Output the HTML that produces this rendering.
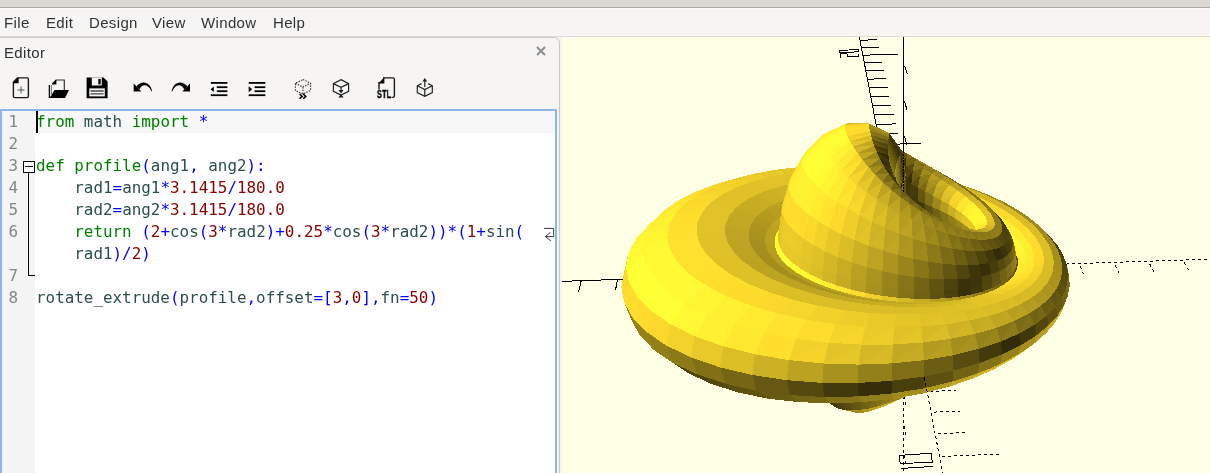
<!DOCTYPE html>
<html><head><meta charset="utf-8"><title>PythonSCAD</title>
<style>
html,body{margin:0;padding:0;}
#menubar,#docktitle,.ln,.cl,#stl{will-change:transform;}
body{width:1210px;height:473px;overflow:hidden;position:relative;background:#f6f5f4;font-family:"Liberation Sans",sans-serif;color:#2e3436;}
#topstrip{position:absolute;left:0;top:0;width:1210px;height:8px;background:#dbd7d2;border-bottom:1px solid #aca7a2;box-sizing:border-box;}
#menubar{position:absolute;left:0;top:8px;width:1210px;height:28px;background:#f6f5f4;border-bottom:1px solid #dedad6;border-top:1px solid #fafaf9;box-sizing:content-box;height:27px}
#menubar span{position:absolute;top:4px;font-size:15px;line-height:20px;white-space:nowrap;letter-spacing:0.35px;}
#dock{position:absolute;left:-1px;top:37px;width:561px;height:440px;box-sizing:border-box;border:1px solid #cdc7c2;border-top-right-radius:6px;background:#f6f5f4;}
#docktitle{position:absolute;left:4px;top:43px;font-size:15px;line-height:20px;letter-spacing:0.35px;}
#view{position:absolute;left:562px;top:37px;width:648px;height:436px;background:#ffffe5;overflow:hidden;}
#view svg{position:absolute;left:-562px;top:-37px;}
#edframe{position:absolute;left:0;top:109px;width:557px;height:370px;box-sizing:border-box;border:2px solid #8db5ea;border-right-width:2px;background:#fff;}
#margin{position:absolute;left:2px;top:111px;width:33px;height:362px;background:#f4f4f4;}
#caretline{position:absolute;left:35px;top:111px;width:520px;height:22px;background:#f7f7f7;}
#caret{position:absolute;left:36px;top:111px;width:2px;height:22px;background:#000;}
.ln,.cl{position:absolute;font-family:"DejaVu Sans Mono","Liberation Mono",monospace;font-size:15.9px;line-height:22px;height:22px;white-space:pre;}
.ln{left:1px;width:17px;text-align:right;color:#868686;}
.cl{left:35.9px;color:#2f4f4f;letter-spacing:0px;}
.k{color:#008000}.o{color:#0000ff}.n{color:#8b0000}
#icons{position:absolute;left:0;top:0;}
</style></head><body>
<div id="topstrip"></div>
<div id="menubar"><span style="left:4px">File</span><span style="left:46px">Edit</span><span style="left:89px">Design</span><span style="left:152px">View</span><span style="left:201px">Window</span><span style="left:273px">Help</span></div>
<div id="dock"></div>
<div id="docktitle">Editor</div>
<div id="edframe"></div><div id="margin"></div><div id="caretline"></div>
<div class="ln" style="top:111px">1</div>
<div class="ln" style="top:133px">2</div>
<div class="ln" style="top:155px">3</div>
<div class="ln" style="top:177px">4</div>
<div class="ln" style="top:199px">5</div>
<div class="ln" style="top:221px">6</div>
<div class="ln" style="top:265px">7</div>
<div class="ln" style="top:287px">8</div>
<div class="cl" style="top:111px"><span class="k">from</span> math <span class="k">import</span> <span class="o">*</span></div>
<div class="cl" style="top:155px"><span class="k">def</span> <span class="k">profile</span><span class="o">(</span>ang1<span class="o">,</span> ang2<span class="o">):</span></div>
<div class="cl" style="top:177px">    rad1<span class="o">=</span>ang1<span class="o">*</span><span class="n">3.1415</span><span class="o">/</span><span class="n">180.0</span></div>
<div class="cl" style="top:199px">    rad2<span class="o">=</span>ang2<span class="o">*</span><span class="n">3.1415</span><span class="o">/</span><span class="n">180.0</span></div>
<div class="cl" style="top:221px">    <span class="k">return</span> <span class="o">(</span><span class="n">2</span><span class="o">+</span>cos<span class="o">(</span><span class="n">3</span><span class="o">*</span>rad2<span class="o">)+</span><span class="n">0.25</span><span class="o">*</span>cos<span class="o">(</span><span class="n">3</span><span class="o">*</span>rad2<span class="o">))*(</span><span class="n">1</span><span class="o">+</span>sin<span class="o">(</span></div>
<div class="cl" style="top:243px">    rad1<span class="o">)/</span><span class="n">2</span><span class="o">)</span></div>
<div class="cl" style="top:287px">rotate_extrude<span class="o">(</span>profile<span class="o">,</span>offset<span class="o">=[</span><span class="n">3</span><span class="o">,</span><span class="n">0</span><span class="o">],</span>fn<span class="o">=</span><span class="n">50</span><span class="o">)</span></div>
<div id="caret"></div>
<svg style="position:absolute;left:0;top:109px" width="557" height="364" viewBox="0 109 557 364" shape-rendering="crispEdges">
<path d="M28.5,172 V275.5 H35" fill="none" stroke="#000" stroke-width="1"/>
<rect x="23.5" y="161.5" width="11" height="11" fill="#fff" stroke="#000" stroke-width="1"/>
<path d="M25,166.5 H33" stroke="#000" stroke-width="1"/>
<g shape-rendering="auto" fill="none" stroke="#222" stroke-width="0.9"><path d="M544,228.4 H553.7 V236.6 H545.5 M550.5,232.4 L545.4,236.6 L550.8,240.8"/></g>
</svg>
<svg id="icons" width="560" height="110" viewBox="0 0 560 110">
<!-- close x -->
<path d="M537,47 L545,55 M545,47 L537,55" stroke="#8b8e8f" stroke-width="2" fill="none"/>
<!-- new -->
<g fill="none" stroke="#1a1a1a" stroke-width="1.4">
<path d="M17.5,77.9 H27 Q28.4,77.9 28.4,79.3 V96.2 Q28.4,97.6 27,97.6 H14.8 Q13.4,97.6 13.4,96.2 V82 Z"/>
</g>
<path d="M12.7,83.2 L18.6,77.2 L18.6,83.2 Z" fill="#000"/>
<path d="M17.5,90 H24.5 M21,86.5 V93.5" stroke="#555" stroke-width="1" fill="none"/>
<!-- open -->
<path d="M52.3,84 L56,80 H64.3 V90" fill="none" stroke="#333" stroke-width="1.2"/>
<path d="M51.8,84.6 L56.4,79.6 L56.4,84.6 Z" fill="#000"/>
<path d="M49.4,85 V97.4 H51" fill="none" stroke="#111" stroke-width="1.4"/>
<path d="M51.5,85 V95" fill="none" stroke="#666" stroke-width="0.8"/>
<path d="M54.5,90 H69 L65,97.9 H49.8 Z" fill="#000"/>
<!-- save -->
<path d="M86.6,77.5 H103.5 L107.6,81.5 V98.2 H86.6 Z" fill="#000"/>
<rect x="91.8" y="77.5" width="10" height="8" fill="#f6f5f4"/>
<rect x="98.3" y="79" width="2.4" height="5.4" fill="#000"/>
<rect x="89.3" y="88.4" width="15.5" height="8" fill="#f6f5f4"/>
<path d="M90.5,91 H103.6 M90.5,93.8 H103.6" stroke="#444" stroke-width="1.3"/>
<!-- undo -->
<path d="M133.7,83.5 L141.3,91.5 L133.7,91.5 Z" fill="#000"/>
<path d="M136.4,86.2 Q141,81.4 146,82.9 Q150.6,84.4 152.1,91 L151.3,91.2 Q149.4,86.4 145.5,85.3 Q142,84.6 139.4,89.4 Z" fill="#000"/>
<!-- redo -->
<path d="M190,83.5 L182.4,91.5 L190,91.5 Z" fill="#000"/>
<path d="M187.3,86.2 Q182.7,81.4 177.7,82.9 Q173.1,84.4 171.6,91 L172.4,91.2 Q174.3,86.4 178.2,85.3 Q181.7,84.6 184.3,89.4 Z" fill="#000"/>
<!-- unindent -->
<g fill="#000">
<rect x="210.8" y="82" width="16.6" height="1.8"/><rect x="216.8" y="86.3" width="10.6" height="1.8"/><rect x="216.8" y="90.3" width="10.6" height="1.8"/><rect x="210.8" y="94.3" width="16.6" height="1.8"/>
<path d="M210.6,89.2 L213.8,86.4 V92 Z"/>
<rect x="248.7" y="82" width="16.6" height="1.8"/><rect x="254.6" y="86.3" width="10.7" height="1.8"/><rect x="254.6" y="90.3" width="10.7" height="1.8"/><rect x="248.7" y="94.3" width="16.6" height="1.8"/>
<path d="M252.2,89.2 L248.7,86.2 V92.2 Z"/>
</g>
<!-- preview -->
<g fill="none" stroke="#222" stroke-width="1.1" stroke-dasharray="1.4 1.3">
<path d="M303,79.5 L310.6,83.3 V90.5 L303,94 L295.4,90.5 V83.3 Z"/><path d="M295.4,83.3 L303,87 L310.6,83.3 M303,87 V94"/>
</g>
<path d="M299.6,94 L302.2,96.4 L299.6,98.8 M303.2,94 L305.8,96.4 L303.2,98.8" fill="none" stroke="#000" stroke-width="1.5"/>
<!-- render -->
<g fill="none" stroke="#222" stroke-width="1.2">
<path d="M341,79.6 L348.6,83.6 V91.3 L341,95 L333.4,91.3 V83.6 Z"/><path d="M333.4,83.6 L341,87.4 L348.6,83.6 M341,87.4 V91"/>
</g>
<path d="M338.4,90 H343.6 L341,93.6 Z M338.4,97.6 H343.6 L341,94 Z" fill="#222"/>
<!-- STL -->
<path d="M383,77.9 H393 Q394.4,77.9 394.4,79.3 V96 Q394.4,97.4 393,97.4 H391.5 M379,89.5 V82" fill="none" stroke="#1a1a1a" stroke-width="1.4"/>
<path d="M378.2,83.6 L384.4,77.2 L384.4,83.6 Z" fill="#000"/>
<!-- send -->
<g fill="none" stroke="#222" stroke-width="1.2">
<path d="M421.5,83.6 L417.3,85.8 V92.6 L424.8,96.3 L432.3,92.6 V85.8 L428.1,83.6"/><path d="M417.3,85.8 L424.8,89.5 L432.3,85.8 M424.8,89.5 V96.3"/>
<path d="M424.8,87 V79.5"/>
</g>
<path d="M422.4,81.6 L424.8,78 L427.2,81.6 Z" fill="#222"/>
</svg>

<div id="stl" style="position:absolute;left:376.9px;top:88.6px;font:bold 10.4px/12px 'Liberation Sans',sans-serif;color:#000;transform:scaleX(0.7);transform-origin:0 0;letter-spacing:0.2px;-webkit-text-stroke:0.35px #000">STL</div>
<div id="view"><svg width="1210" height="473" viewBox="0 0 1210 473" shape-rendering="crispEdges">
<g fill="none" stroke="#000" stroke-width="1">
<path d="M903.8,269.6L788.8,-332.6M903.8,269.6L397.8,287M903.8,269.6L903.8,-45.8M901,254.9L925.2,254.1M868.4,270.8L870,281.5M904.4,237.2L907.1,247.5M898.3,240.8L922.1,240M832.9,272L834,282.7M904.4,204.2L907.1,214.1M895.7,227.2L919,226.4M797.3,273.3L797.8,284M904.4,170.5L907.1,180.1M893.2,214.1L916.1,213.3M761.6,274.5L761.6,285.3M904.4,136.2L907.1,145.3M890.8,201.5L913.3,200.7M725.7,275.7L725.3,286.5M904.4,101.3L907.1,109.9M888.5,189.3L910.5,188.6M689.8,277L688.8,287.8M904.4,65.6L907.2,73.8M886.2,177.5L907.9,176.9M653.7,278.2L652.2,289.1M904.4,29.2L907.2,37M884.1,166.2L905.4,165.5M617.5,279.4L615.5,290.4M904.4,-7.9L907.2,-0.6M882,155.2L902.9,154.6M581.2,280.7L578.6,291.6M879.9,144.6L921.2,143.4M544.8,281.9L538.5,304.2M878,134.3L898.3,133.8M508.2,283.2L504.6,294.2M876.1,124.4L896.1,123.9M471.5,284.4L467.4,295.5M874.2,114.8L893.9,114.3M434.8,285.7L430.1,296.8M872.5,105.5L891.8,105M870.7,96.5L889.8,96M869.1,87.7L887.8,87.2M867.5,79.2L885.9,78.7M865.9,71L884.1,70.5M864.3,63L882.3,62.5M862.9,55.2L898.3,54.3M861.4,47.6L878.9,47.2M860,40.2L877.2,39.8M858.6,33.1L875.6,32.7M857.3,26.1L874.1,25.7M856,19.4L872.6,19M854.8,12.8L871.1,12.4M853.5,6.3L869.7,6M852.3,0.1L868.3,-0.3M851.2,-6L866.9,-6.4M850,-12L881.1,-12.7M848.9,-17.8L864.3,-18.1M847.9,-23.5L863,-23.8M846.8,-29L861.8,-29.3M845.8,-34.4L860.5,-34.7"/>
<path stroke-dasharray="3 3" d="M903.8,269.6L924.4,377.5M903.8,269.6L1387.4,253M903.8,269.6L903.8,536"/>
<path stroke-dasharray="3 3" stroke-dashoffset="3" d="M906.7,284.9L931.9,284M939.1,268.4L941.6,279M903.8,301.4L905.8,312.4M909.8,300.8L935.5,299.9M974.2,267.2L977.2,277.7M903.8,332.6L905.8,343.9M912.9,317.4L939.2,316.4M1009.3,266L1012.8,276.5M903.8,363.3L905.8,374.9M916.2,334.7L943,333.7M1044.2,264.8L1048.2,275.3M903.8,393.4L905.8,405.3M919.7,352.8L947.1,351.7M1079,263.6L1083.5,274M903.8,422.9L905.7,435.1M923.3,371.7L951.3,370.6M1113.7,262.4L1118.7,272.8M903.8,451.9L905.7,464.4M927.1,391.5L955.7,390.3M1148.3,261.2L1153.7,271.6M903.8,480.5L905.7,493.2M931,412.2L960.3,411M1182.8,260L1188.7,270.4M903.8,508.5L905.7,521.5M935.2,433.9L965.2,432.6M1217.2,258.8L1223.5,269.2M939.5,456.6L1001,454M1251.5,257.7L1265.3,278.5M944.1,480.6L975.6,479.2M1285.6,256.5L1292.9,266.8M948.9,505.8L981.2,504.3M1319.7,255.3L1327.4,265.5M954,532.3L987.2,530.8M1353.6,254.1L1361.8,264.4"/>
<path d="M840.5,58 V54 L847,53.5 L847.5,57 L858.5,56.2 V53.8 M839.5,52.6 V50.5 L858,49.5 L858.6,51.8 Z"/>
<path d="M899,455.4 L931,453.3 L932.4,462.3 L900.2,463.5 Z M901,468.5 L932.8,466.4"/>
</g>
<g id="obj">
<rect x="893" y="175" width="4" height="6" fill="#483e0d"/>
<path fill="#9e881c" d="M972.4,188.6L953.9,182.7L950.7,182L968.1,187.8z"/>
<path fill="#9a851b" d="M989.1,195.1L972.4,188.6L968.1,187.8z"/>
<path fill="#9d881c" d="M989.1,195.1L968.1,187.8L984,194.2z"/>
<path fill="#d2b525" d="M968.1,187.8L950.7,182L946.9,185.4L963.1,190.8z"/>
<path fill="#e4c528" d="M797.5,167.2L774.6,169.9L788.2,173.5L808.3,171.2z"/>
<path fill="#d3b625" d="M984,194.2L968.1,187.8L963.1,190.8L978,196.7z"/>
<path fill="#99841b" d="M1004,202.1L989.1,195.1L984,194.2z"/>
<path fill="#9c871c" d="M1004,202.1L984,194.2L998.2,200.9z"/>
<path fill="#eecd2a" d="M739.1,177.5L716.3,183.9L732.2,179.6L752.7,174z"/>
<path fill="#e9c929" d="M774.6,169.9L752.7,174L768.9,177.1L788.2,173.5z"/>
<path fill="#f4d32b" d="M978,196.7L963.1,190.8L958.2,196.6L972,201.9z"/>
<path fill="#d4b725" d="M998.2,200.9L984,194.2L978,196.7L991.4,203.1z"/>
<path fill="#e2c428" d="M808.3,171.2L788.2,173.5L801.7,181.9z"/>
<path fill="#99851b" d="M1017,209.4L1004,202.1L998.2,200.9z"/>
<path fill="#9c871c" d="M1017,209.4L998.2,200.9L1010.7,208.1z"/>
<path fill="#f7d52c" d="M991.4,203.1L978,196.7L972,201.9L984.7,207.6z"/>
<path fill="#edcd2a" d="M752.7,174L732.2,179.6L751.1,181.9L768.9,177.1z"/>
<path fill="#e1c228" d="M788.2,173.5L768.9,177.1L785.1,185.1L801.7,181.9z"/>
<path fill="#d6b826" d="M1010.7,208.1L998.2,200.9L991.4,203.1L1003.3,209.7z"/>
<path fill="#f8d62c" d="M716.3,183.9L695.5,191.8L713.6,186.5L732.2,179.6z"/>
<path fill="#9a851b" d="M1028.4,217L1017,209.4L1010.7,208.1z"/>
<path fill="#9d881c" d="M1028.4,217L1010.7,208.1L1021.6,215.4z"/>
<path fill="#fad82c" d="M1003.3,209.7L991.4,203.1L984.7,207.6L996,213.7z"/>
<path fill="#d4b726" d="M801.7,181.9L785.1,185.1L798.9,195.3z"/>
<path fill="#d7ba26" d="M1021.6,215.4L1010.7,208.1L1003.3,209.7L1013.7,216.6z"/>
<path fill="#e1c228" d="M768.9,177.1L751.1,181.9L769.9,189.4L785.1,185.1z"/>
<path fill="#f2d12b" d="M732.2,179.6L713.6,186.5L735,187.9L751.1,181.9z"/>
<path fill="#fcda2d" d="M1013.7,216.6L1003.3,209.7L996,213.7L1006,220z"/>
<path fill="#9d881c" d="M1038,224.8L1028.4,217L1021.6,215.4L1030.9,222.9z"/>
<path fill="#cfb325" d="M785.1,185.1L769.9,189.4L785.8,199.3L798.9,195.3z"/>
<path fill="#ffde2d" d="M695.5,191.8L677.4,201.1L697.5,194.7L713.6,186.5z"/>
<path fill="#ffed30" d="M1006,220L996,213.7L989.9,218.5L999.4,224.3z"/>
<path fill="#d9bb26" d="M1030.9,222.9L1021.6,215.4L1013.7,216.6L1022.6,223.7z"/>
<path fill="#e0c228" d="M751.1,181.9L735,187.9L756.3,194.7L769.9,189.4z"/>
<path fill="#443a0c" d="M1050.8,237.2L1042.6,229.2L1038,224.8L1045.9,232.7z"/>
<path fill="#fedc2d" d="M1022.6,223.7L1013.7,216.6L1006,220L1014.5,226.5z"/>
<path fill="#f6d42b" d="M713.6,186.5L697.5,194.7L721.2,195L735,187.9z"/>
<path fill="#9f891c" d="M1045.9,232.7L1038,224.8L1030.9,222.9L1038.6,230.5z"/>
<path fill="#ffef31" d="M1014.5,226.5L1006,220L999.4,224.3L1007.7,230.3z"/>
<path fill="#ccb024" d="M769.9,189.4L756.3,194.7L774.3,204.1L785.8,199.3z"/>
<path fill="#dabc27" d="M1038.6,230.5L1030.9,222.9L1022.6,223.7L1030,230.9z"/>
<path fill="#e0c228" d="M735,187.9L721.2,195L744.7,201L756.3,194.7z"/>
<path fill="#bca321" d="M785.8,199.3L774.3,204.1L787.1,212.5z"/>
<path fill="#ffdd2d" d="M1030,230.9L1022.6,223.7L1014.5,226.5L1021.6,233.2z"/>
<path fill="#ffe62f" d="M677.4,201.1L662.5,211.8L684.3,204.1L697.5,194.7z"/>
<path fill="#463c0c" d="M1057.4,245.3L1050.8,237.2L1045.9,232.7L1052.3,240.6z"/>
<path fill="#fff031" d="M1021.6,233.2L1014.5,226.5L1007.7,230.3L1014.5,236.5z"/>
<path fill="#fff833" d="M1014.5,236.5L1007.7,230.3L1002.8,233.6L1009.5,239.4z"/>
<path fill="#c8ad23" d="M756.3,194.7L744.7,201L764.6,209.8L774.3,204.1z"/>
<path fill="#a08a1c" d="M1052.3,240.6L1045.9,232.7L1038.6,230.5L1044.7,238.2z"/>
<path fill="#746414" d="M951.3,178.7L940.8,172.6L936.4,170.5L946.2,176.6z"/>
<path fill="#776715" d="M961.4,185L951.3,178.7L946.2,176.6z"/>
<path fill="#7a6916" d="M961.4,185L946.2,176.6L955.6,182.8z"/>
<path fill="#b69e20" d="M774.3,204.1L764.6,209.8L778.6,217.7L787.1,212.5z"/>
<path fill="#716214" d="M940.8,172.6L926.5,164.6L936.4,170.5z"/>
<path fill="#dbbd27" d="M1044.7,238.2L1038.6,230.5L1030,230.9L1035.8,238.1z"/>
<path fill="#fad82c" d="M697.5,194.7L684.3,204.1L710.1,203.2L721.2,195z"/>
<path fill="#7b6a16" d="M970.7,191.4L961.4,185L955.6,182.8z"/>
<path fill="#7f6d16" d="M970.7,191.4L955.6,182.8L964.4,189z"/>
<path fill="#ffdd2d" d="M1035.8,238.1L1030,230.9L1021.6,233.2L1027.1,239.9z"/>
<path fill="#dcbe27" d="M874.7,408.2L876.3,407.3L860.9,413z"/>
<path fill="#fff031" d="M1027.1,239.9L1021.6,233.2L1014.5,236.5L1019.9,242.8z"/>
<path fill="#c4a923" d="M787.1,212.5L778.6,217.7L786.6,221.5z"/>
<path fill="#fff833" d="M1019.9,242.8L1014.5,236.5L1009.5,239.4L1014.7,245.4z"/>
<path fill="#ffeb30" d="M648.3,225.6L636.2,238.6L651.3,223.6L662.5,211.8z"/>
<path fill="#7f6e16" d="M979.1,197.8L970.7,191.4L964.4,189z"/>
<path fill="#837117" d="M979.1,197.8L964.4,189L972.5,195.3z"/>
<path fill="#a38d1d" d="M946.2,176.6L936.4,170.5L931.9,173.4z"/>
<path fill="#9f891c" d="M946.2,176.6L931.9,173.4L940.8,179.1z"/>
<path fill="#e0c228" d="M721.2,195L710.1,203.2L735.6,208.1L744.7,201z"/>
<path fill="#97821b" d="M936.4,170.5L926.5,164.6L923,167.8z"/>
<path fill="#8f7b19" d="M936.4,170.5L923,167.8L931.9,173.4z"/>
<path fill="#af971f" d="M955.6,182.8L946.2,176.6L940.8,179.1L949.6,184.9z"/>
<path fill="#483e0d" d="M1062.4,253.6L1057.4,245.3L1052.3,240.6L1057.2,248.7z"/>
<path fill="#8c7919" d="M926.5,164.6L916.7,158.9L914.5,162.5z"/>
<path fill="#7f6e16" d="M926.5,164.6L914.5,162.5L923,167.8z"/>
<path fill="#bda321" d="M964.4,189L955.6,182.8L949.6,184.9L957.9,190.7z"/>
<path fill="#736314" d="M940,210.5L933.5,217.8L941.4,220.6z"/>
<path fill="#706014" d="M940,210.5L932.2,207.1L933.5,217.8z"/>
<path fill="#5d5010" d="M932.2,207.1L925.7,215.4L933.5,217.8z"/>
<path fill="#594d10" d="M932.2,207.1L924.6,203.9L925.7,215.4z"/>
<path fill="#e5c629" d="M876.3,407.3L878.5,405.9L865.5,412.3z"/>
<path fill="#847217" d="M947.6,214.2L940,210.5L941.4,220.6L949.1,223.7z"/>
<path fill="#c6ab23" d="M744.7,201L735.6,208.1L757,216.1L764.6,209.8z"/>
<path fill="#443b0c" d="M924.6,203.9L918.3,213.3L925.7,215.4z"/>
<path fill="#40370b" d="M924.6,203.9L917.5,201L918.3,213.3z"/>
<path fill="#a28b1d" d="M1057.2,248.7L1052.3,240.6L1044.7,238.2L1049.3,245.8z"/>
<path fill="#847217" d="M986.5,204L979.1,197.8L972.5,195.3z"/>
<path fill="#877518" d="M986.5,204L972.5,195.3L979.6,201.3z"/>
<path fill="#827017" d="M916.7,158.9L907.1,153.5L906.5,157.4z"/>
<path fill="#706114" d="M916.7,158.9L906.5,157.4L914.5,162.5z"/>
<path fill="#c9ad23" d="M972.5,195.3L964.4,189L957.9,190.7z"/>
<path fill="#ccb024" d="M972.5,195.3L957.9,190.7L965.7,196.5z"/>
<path fill="#b29a1f" d="M764.6,209.8L757,216.1L772.1,223.6L778.6,217.7z"/>
<path fill="#937f1a" d="M954.8,218.2L947.6,214.2L949.1,223.7L956.3,227.2z"/>
<path fill="#cfb325" d="M949.6,184.9L940.8,179.1L936.1,185.9z"/>
<path fill="#c6ab23" d="M949.6,184.9L936.1,185.9L944.4,191z"/>
<path fill="#b79e20" d="M940.8,179.1L931.9,173.4L928,180.9z"/>
<path fill="#ab931e" d="M940.8,179.1L928,180.9L936.1,185.9z"/>
<path fill="#c0a622" d="M778.6,217.7L772.1,223.6L780.6,227L786.6,221.5z"/>
<path fill="#39320a" d="M917.5,201L911.6,211.6L918.3,213.3z"/>
<path fill="#3f370b" d="M917.5,201L911.1,198.4L911.6,211.6z"/>
<path fill="#dcbe27" d="M1049.3,245.8L1044.7,238.2L1035.8,238.1L1040.2,245.2z"/>
<path fill="#ffed30" d="M662.5,211.8L651.3,223.6L674.6,214.5L684.3,204.1z"/>
<path fill="#e6c729" d="M957.9,190.7L949.6,184.9L944.4,191z"/>
<path fill="#e1c228" d="M957.9,190.7L944.4,191L952.4,196.2z"/>
<path fill="#9c871c" d="M941,200.1L932.2,207.1L940,210.5z"/>
<path fill="#9f891c" d="M941,200.1L933.1,195.8L932.2,207.1z"/>
<path fill="#b69d20" d="M948.7,204.5L941,200.1L940,210.5L947.6,214.2z"/>
<path fill="#7f6e17" d="M933.1,195.8L924.6,203.9L932.2,207.1z"/>
<path fill="#837117" d="M933.1,195.8L925.4,191.7L924.6,203.9z"/>
<path fill="#a08a1c" d="M931.9,173.4L923,167.8L920,176.1z"/>
<path fill="#8e7b19" d="M931.9,173.4L920,176.1L928,180.9z"/>
<path fill="#ffdd2d" d="M1040.2,245.2L1035.8,238.1L1027.1,239.9L1031.2,246.6z"/>
<path fill="#7b6a16" d="M907.1,153.5L898,148.4L899.2,152.5z"/>
<path fill="#645612" d="M907.1,153.5L899.2,152.5L906.5,157.4z"/>
<path fill="#9e881c" d="M961.2,222.3L954.8,218.2L956.3,227.2L962.8,230.9z"/>
<path fill="#c5aa23" d="M944.4,191L936.1,185.9L933.1,195.8z"/>
<path fill="#bba221" d="M944.4,191L933.1,195.8L941,200.1z"/>
<path fill="#fbd82c" d="M965.7,196.5L957.9,190.7L952.4,196.2z"/>
<path fill="#f8d62c" d="M965.7,196.5L952.4,196.2L959.8,201.4z"/>
<path fill="#ffef31" d="M1031.2,246.6L1027.1,239.9L1019.9,242.8L1023.7,249.1z"/>
<path fill="#e0c228" d="M952.4,196.2L944.4,191L941,200.1z"/>
<path fill="#d9bb26" d="M952.4,196.2L941,200.1L948.7,204.5z"/>
<path fill="#d3b625" d="M979.6,201.3L972.5,195.3L965.7,196.5z"/>
<path fill="#d7b926" d="M979.6,201.3L965.7,196.5L972.5,202.2z"/>
<path fill="#fff733" d="M1023.7,249.1L1019.9,242.8L1014.7,245.4L1018.5,251.4z"/>
<path fill="#3f360b" d="M831.2,404.4L834.8,407.1L818.1,394.2z"/>
<path fill="#cbaf24" d="M955.9,209.1L948.7,204.5L947.6,214.2L954.8,218.2z"/>
<path fill="#fff231" d="M1018.5,251.4L1014.7,245.4L1011.9,246.6L1015.5,252.5z"/>
<path fill="#9b861b" d="M936.1,185.9L925.4,191.7L933.1,195.8z"/>
<path fill="#a7911e" d="M936.1,185.9L928,180.9L925.4,191.7z"/>
<path fill="#615411" d="M925.4,191.7L917.5,201L924.6,203.9z"/>
<path fill="#655712" d="M925.4,191.7L918.1,187.8L917.5,201z"/>
<path fill="#9a851b" d="M857.2,412.9L860.9,413L845.3,410.1z"/>
<path fill="#917d1a" d="M857.2,412.9L845.3,410.1L839.5,409z"/>
<path fill="#897618" d="M923,167.8L914.5,162.5L912.7,171.5z"/>
<path fill="#736314" d="M923,167.8L912.7,171.5L920,176.1z"/>
<path fill="#877518" d="M992.6,210.1L986.5,204L979.6,201.3z"/>
<path fill="#8b7819" d="M992.6,210.1L979.6,201.3L985.6,207.2z"/>
<path fill="#f8d62c" d="M959.8,201.4L952.4,196.2L948.7,204.5z"/>
<path fill="#f3d22b" d="M959.8,201.4L948.7,204.5L955.9,209.1z"/>
<path fill="#7a6916" d="M928,180.9L918.1,187.8L925.4,191.7z"/>
<path fill="#897618" d="M928,180.9L920,176.1L918.1,187.8z"/>
<path fill="#dbbd27" d="M962.4,213.7L955.9,209.1L954.8,218.2L961.2,222.3z"/>
<path fill="#fddb2d" d="M684.3,204.1L674.6,214.5L702.1,212.3L710.1,203.2z"/>
<path fill="#ffe72f" d="M972.5,202.2L965.7,196.5L959.8,201.4L966.4,206.6z"/>
<path fill="#41380c" d="M918.1,187.8L911.1,198.4L917.5,201z"/>
<path fill="#463c0c" d="M918.1,187.8L911.4,184.2L911.1,198.4z"/>
<path fill="#a48e1d" d="M966.6,226.4L961.2,222.3L962.8,230.9L968.3,234.8z"/>
<path fill="#ffe72f" d="M966.4,206.6L959.8,201.4L955.9,209.1z"/>
<path fill="#ffe42f" d="M966.4,206.6L955.9,209.1L962.4,213.7z"/>
<path fill="#3f360b" d="M1003.4,221.7L998.4,215.8L992.6,210.1L997.4,215.9z"/>
<path fill="#736314" d="M914.5,162.5L906.5,157.4L906,167z"/>
<path fill="#584c10" d="M914.5,162.5L906,167L912.7,171.5z"/>
<path fill="#594d10" d="M920,176.1L911.4,184.2L918.1,187.8z"/>
<path fill="#6b5c13" d="M920,176.1L912.7,171.5L911.4,184.2z"/>
<path fill="#dbbd27" d="M985.6,207.2L979.6,201.3L972.5,202.2z"/>
<path fill="#dfc027" d="M985.6,207.2L972.5,202.2L978.2,207.7z"/>
<path fill="#4c410d" d="M1065.8,262L1062.4,253.6L1057.2,248.7L1060.4,256.8z"/>
<path fill="#e1c228" d="M710.1,203.2L702.1,212.3L729,216.1L735.6,208.1z"/>
<path fill="#e5c629" d="M967.9,218.3L962.4,213.7L961.2,222.3L966.6,226.4z"/>
<path fill="#42390c" d="M911.4,184.2L905.5,196L911.1,198.4z"/>
<path fill="#3d340b" d="M911.4,184.2L905.6,180.7L905.5,196z"/>
<path fill="#a58e1d" d="M860.9,413L865.5,412.3L852.2,410.4z"/>
<path fill="#9a851b" d="M860.9,413L852.2,410.4L845.3,410.1z"/>
<path fill="#fff332" d="M978.2,207.7L972.5,202.2L966.4,206.6L972,211.6z"/>
<path fill="#433a0c" d="M834.8,407.1L839.5,409L824.3,397.3z"/>
<path fill="#3f370b" d="M834.8,407.1L824.3,397.3L818.1,394.2z"/>
<path fill="#c3a923" d="M735.6,208.1L729,216.1L751.7,223.1L757,216.1z"/>
<path fill="#fff231" d="M972,211.6L966.4,206.6L962.4,213.7L967.9,218.3z"/>
<path fill="#8c7919" d="M997.4,215.9L992.6,210.1L985.6,207.2L990.1,212.7z"/>
<path fill="#ae961f" d="M757,216.1L751.7,223.1L767.6,229.9L772.1,223.6z"/>
<path fill="#a6901d" d="M970.8,230.5L966.6,226.4L968.3,234.8z"/>
<path fill="#a38d1d" d="M1060.4,256.8L1057.2,248.7L1049.3,245.8L1052.3,253.4z"/>
<path fill="#bda321" d="M772.1,223.6L767.6,229.9L776.5,233L780.6,227z"/>
<path fill="#39310a" d="M912.7,171.5L905.6,180.7L911.4,184.2z"/>
<path fill="#4e430e" d="M912.7,171.5L906,167L905.6,180.7z"/>
<path fill="#605311" d="M906.5,157.4L899.2,152.5L900.2,162.8z"/>
<path fill="#40370b" d="M906.5,157.4L900.2,162.8L906,167z"/>
<path fill="#dcbe27" d="M1052.3,253.4L1049.3,245.8L1040.2,245.2L1042.9,252.4z"/>
<path fill="#fff031" d="M1020.6,257.5L1018.5,251.4L1015.5,252.5L1017.5,258.4z"/>
<path fill="#4d430e" d="M1017.5,258.4L1015.5,252.5L1014.3,251.4L1016.3,257.2z"/>
<path fill="#fff532" d="M1026,255.4L1023.7,249.1L1018.5,251.4L1020.6,257.5z"/>
<path fill="#ffdc2d" d="M1042.9,252.4L1040.2,245.2L1031.2,246.6L1033.7,253.3z"/>
<path fill="#ffed31" d="M1033.7,253.3L1031.2,246.6L1023.7,249.1L1026,255.4z"/>
<path fill="#e1c228" d="M990.1,212.7L985.6,207.2L978.2,207.7z"/>
<path fill="#e4c528" d="M990.1,212.7L978.2,207.7L982.7,212.9z"/>
<path fill="#605311" d="M905.6,180.7L901.1,193.8L905.5,196z"/>
<path fill="#5a4e10" d="M905.6,180.7L900.9,177.5L901.1,193.8z"/>
<path fill="#eaca29" d="M972,222.6L967.9,218.3L966.6,226.4L970.8,230.5z"/>
<path fill="#41380c" d="M1006.8,227.4L1003.4,221.7L997.4,215.9L1000.7,221.3z"/>
<path fill="#b1991f" d="M865.5,412.3L870.8,411L860,409.9z"/>
<path fill="#a48e1d" d="M865.5,412.3L860,409.9L852.2,410.4z"/>
<path fill="#fff933" d="M982.7,212.9L978.2,207.7L972,211.6L976.2,216.4z"/>
<path fill="#fff833" d="M976.2,216.4L972,211.6L967.9,218.3L972,222.6z"/>
<path fill="#ffec30" d="M780.6,227L776.5,233L780.1,229.7z"/>
<path fill="#fff432" d="M636.2,238.6L628.6,252.5L644.4,236.3L651.3,223.6z"/>
<path fill="#483f0d" d="M906,167L900.9,177.5L905.6,180.7z"/>
<path fill="#332c09" d="M906,167L900.2,162.8L900.9,177.5z"/>
<path fill="#4a400d" d="M839.5,409L845.3,410.1L831.8,399.5z"/>
<path fill="#453c0c" d="M839.5,409L831.8,399.5L824.3,397.3z"/>
<path fill="#8e7a19" d="M1000.7,221.3L997.4,215.9L990.1,212.7L993.2,217.8z"/>
<path fill="#e8c829" d="M974.7,226.7L972,222.6L970.8,230.5L973.4,234.4z"/>
<path fill="#e4c428" d="M993.2,217.8L990.1,212.7L982.7,212.9L985.6,217.5z"/>
<path fill="#887518" d="M1069.4,277.2L1067.5,268.4L1065.8,262L1067.7,270.6z"/>
<path fill="#5b4e10" d="M1012.9,240.2L1010.9,234.7L1006.8,227.4L1008.6,232.6z"/>
<path fill="#fff232" d="M651.3,223.6L644.4,236.3L668.8,225.8L674.6,214.5z"/>
<path fill="#bea422" d="M870.8,411L877,409L868.8,408.5z"/>
<path fill="#b0981f" d="M870.8,411L868.8,408.5L860,409.9z"/>
<path fill="#fff833" d="M979,220.7L976.2,216.4L972,222.6L974.7,226.7z"/>
<path fill="#fffb33" d="M985.6,217.5L982.7,212.9L976.2,216.4L979,220.7z"/>
<path fill="#bba121" d="M767.6,229.9L765.3,236.7L774.5,239.4L776.5,233z"/>
<path fill="#4f440e" d="M1067.7,270.6L1065.8,262L1060.4,256.8L1062.1,264.9z"/>
<path fill="#52470e" d="M1017.9,264.3L1017.5,258.4L1016.3,257.2L1016.7,263z"/>
<path fill="#ffed30" d="M1021.1,263.5L1020.6,257.5L1017.5,258.4L1017.9,264.3z"/>
<path fill="#ab931e" d="M751.7,223.1L748.9,230.6L765.3,236.7L767.6,229.9z"/>
<path fill="#fff432" d="M776.5,233L774.5,239.4L778.2,235.8L780.1,229.7z"/>
<path fill="#a48e1d" d="M1016.7,263L1016.3,257.2L1015.9,253.6L1016.2,259.2z"/>
<path fill="#453c0c" d="M1008.6,232.6L1006.8,227.4L1000.7,221.3L1002.3,226.2z"/>
<path fill="#fff231" d="M1026.6,261.6L1026,255.4L1020.6,257.5L1021.1,263.5z"/>
<path fill="#ffdd2d" d="M674.6,214.5L668.8,225.8L697.4,222.2L702.1,212.3z"/>
<path fill="#54480f" d="M845.3,410.1L852.2,410.4L840.7,400.8z"/>
<path fill="#4e430e" d="M845.3,410.1L840.7,400.8L831.8,399.5z"/>
<path fill="#a48e1d" d="M1062.1,264.9L1060.4,256.8L1052.3,253.4L1053.7,261.1z"/>
<path fill="#c1a722" d="M729,216.1L725.5,224.6L748.9,230.6L751.7,223.1z"/>
<path fill="#ffeb30" d="M1034.5,259.9L1033.7,253.3L1026,255.4L1026.6,261.6z"/>
<path fill="#e0c128" d="M975.8,230.3L974.7,226.7L973.4,234.4z"/>
<path fill="#e1c228" d="M702.1,212.3L697.4,222.2L725.5,224.6L729,216.1z"/>
<path fill="#a08a1c" d="M1016.2,259.2L1015.9,253.6L1015.1,247.6L1015.4,253.1z"/>
<path fill="#dcbe27" d="M1053.7,261.1L1052.3,253.4L1042.9,252.4L1044,259.5z"/>
<path fill="#fddb2d" d="M1044,259.5L1042.9,252.4L1033.7,253.3L1034.5,259.9z"/>
<path fill="#cbaf24" d="M877,409L884.1,406.3L878.5,406.2z"/>
<path fill="#bca221" d="M877,409L878.5,406.2L868.8,408.5z"/>
<path fill="#8f7c19" d="M1002.3,226.2L1000.7,221.3L993.2,217.8L994.7,222.3z"/>
<path fill="#fff231" d="M980.2,224.5L979,220.7L974.7,226.7L975.8,230.3z"/>
<path fill="#827017" d="M1015.4,253.1L1015.1,247.6L1012.9,240.2L1013.1,245.4z"/>
<path fill="#e2c328" d="M994.7,222.3L993.2,217.8L985.6,217.5L986.9,221.7z"/>
<path fill="#fff732" d="M986.9,221.7L985.6,217.5L979,220.7L980.2,224.5z"/>
<path fill="#55490f" d="M1013.1,245.4L1012.9,240.2L1008.6,232.6L1008.8,237.4z"/>
<path fill="#605311" d="M852.2,410.4L860,409.9L850.7,401.2z"/>
<path fill="#594c10" d="M852.2,410.4L850.7,401.2L840.7,400.8z"/>
<path fill="#d8ba26" d="M884.1,406.3L891.9,403L888.8,403.1z"/>
<path fill="#c9ad23" d="M884.1,406.3L888.8,403.1L878.5,406.2z"/>
<path fill="#483f0d" d="M1008.8,237.4L1008.6,232.6L1002.3,226.2L1002.3,230.5z"/>
<path fill="#584c0f" d="M1016.6,270L1017.9,264.3L1016.7,263L1015.3,268.6z"/>
<path fill="#f5d42b" d="M624.1,271.7L621.3,286.9L626,267L628.6,252.5z"/>
<path fill="#ffe930" d="M1019.8,269.3L1021.1,263.5L1017.9,264.3L1016.6,270z"/>
<path fill="#9b851b" d="M1015.3,268.6L1016.7,263L1016.2,259.2L1014.9,264.7z"/>
<path fill="#ffe52f" d="M979.7,227.6L980.2,224.5L975.8,230.3L975.2,233.3z"/>
<path fill="#b9a021" d="M765.3,236.7L765.4,243.8L774.7,246L774.5,239.4z"/>
<path fill="#fffa33" d="M774.5,239.4L774.7,246L778.4,242.2L778.2,235.8z"/>
<path fill="#ffed31" d="M1025.5,267.7L1026.6,261.6L1021.1,263.5L1019.8,269.3z"/>
<path fill="#8f7c19" d="M1002.3,230.5L1002.3,226.2L994.7,222.3L994.6,226.1z"/>
<path fill="#e4c528" d="M891.9,403L900.6,399L899.8,399.1z"/>
<path fill="#d5b826" d="M891.9,403L899.8,399.1L888.8,403.1z"/>
<path fill="#97821b" d="M1014.9,264.7L1016.2,259.2L1015.4,253.1L1014,258.3z"/>
<path fill="#827017" d="M1069.6,286.3L1069.4,277.2L1067.7,270.6L1067.8,279.3z"/>
<path fill="#ffec30" d="M986.5,225L986.9,221.7L980.2,224.5L979.7,227.6z"/>
<path fill="#ddbf27" d="M994.6,226.1L994.7,222.3L986.9,221.7L986.5,225z"/>
<path fill="#a8911e" d="M748.9,230.6L748.8,238.5L765.4,243.8L765.3,236.7z"/>
<path fill="#ffe72f" d="M1033.7,266.4L1034.5,259.9L1026.6,261.6L1025.5,267.7z"/>
<path fill="#6d5e13" d="M860,409.9L868.8,408.5L861.7,400.5z"/>
<path fill="#655712" d="M860,409.9L861.7,400.5L850.7,401.2z"/>
<path fill="#53470e" d="M1067.8,279.3L1067.7,270.6L1062.1,264.9L1062.1,273.1z"/>
<path fill="#dfc027" d="M778.2,235.8L778.4,242.2L779.6,230.9L779.5,224.7z"/>
<path fill="#796815" d="M1014,258.3L1015.4,253.1L1013.1,245.4L1011.7,250.1z"/>
<path fill="#fad82c" d="M1043.4,266.4L1044,259.5L1034.5,259.9L1033.7,266.4z"/>
<path fill="#a68f1d" d="M1062.1,273.1L1062.1,264.9L1053.7,261.1L1053.4,268.6z"/>
<path fill="#dbbd27" d="M1053.4,268.6L1053.7,261.1L1044,259.5L1043.4,266.4z"/>
<path fill="#fffa33" d="M628.6,252.5L626,267L642.3,249.7L644.4,236.3z"/>
<path fill="#c0a522" d="M725.5,224.6L725,233.6L748.8,238.5L748.9,230.6z"/>
<path fill="#4d430e" d="M1011.7,250.1L1013.1,245.4L1008.8,237.4L1007.2,241.6z"/>
<path fill="#e1c228" d="M697.4,222.2L696.5,232.6L725,233.6L725.5,224.6z"/>
<path fill="#7b6b16" d="M868.8,408.5L878.5,406.2L873.6,398.9z"/>
<path fill="#736314" d="M868.8,408.5L873.6,398.9L861.7,400.5z"/>
<path fill="#4d420e" d="M1007.2,241.6L1008.8,237.4L1002.3,230.5L1000.7,234.1z"/>
<path fill="#fff632" d="M644.4,236.3L642.3,249.7L667.3,237.8L668.8,225.8z"/>
<path fill="#e1c228" d="M900.6,399L911.1,394.4L899.8,399.1z"/>
<path fill="#ffe02e" d="M984.5,227.6L986.5,225L979.7,227.6z"/>
<path fill="#ffdd2d" d="M984.5,227.6L979.7,227.6L977.5,229.9z"/>
<path fill="#e2c328" d="M779.5,224.7L779.6,230.9L782.1,212.4L781.9,206.4z"/>
<path fill="#ffdf2e" d="M668.8,225.8L667.3,237.8L696.5,232.6L697.4,222.2z"/>
<path fill="#5f5211" d="M1013.6,275.5L1016.6,270L1015.3,268.6L1012.3,274z"/>
<path fill="#917d1a" d="M1000.7,234.1L1002.3,230.5L994.6,226.1z"/>
<path fill="#8e7a19" d="M1000.7,234.1L994.6,226.1L992.7,229.1z"/>
<path fill="#8f7c19" d="M1012.3,274L1015.3,268.6L1014.9,264.7L1011.8,269.8z"/>
<path fill="#d7ba26" d="M992.7,229.1L994.6,226.1L986.5,225z"/>
<path fill="#d3b625" d="M992.7,229.1L986.5,225L984.5,227.6z"/>
<path fill="#ffe52f" d="M1016.8,275L1019.8,269.3L1016.6,270L1013.6,275.5z"/>
<path fill="#8b7819" d="M1011.8,269.8L1014.9,264.7L1014,258.3L1010.9,263z"/>
<path fill="#94801a" d="M905.2,175.3L898.7,202.7L899.6,201.6z"/>
<path fill="#615411" d="M905.2,175.3L904.1,176.4L898.7,202.7z"/>
<path fill="#ffe830" d="M1022.7,273.6L1025.5,267.7L1019.8,269.3L1016.8,275z"/>
<path fill="#fffe34" d="M774.7,246L777,252.9L780.7,248.8L778.4,242.2z"/>
<path fill="#b79e20" d="M765.4,243.8L767.8,251.1L777,252.9L774.7,246z"/>
<path fill="#8b7818" d="M878.5,406.2L888.8,403.1L886.1,396.3z"/>
<path fill="#817017" d="M878.5,406.2L886.1,396.3L873.6,398.9z"/>
<path fill="#6e5f13" d="M1010.9,263L1014,258.3L1011.7,250.1L1008.5,254.3z"/>
<path fill="#ffe32e" d="M1031,272.7L1033.7,266.4L1025.5,267.7L1022.7,273.6z"/>
<path fill="#ab941e" d="M905.8,174.8L905.2,175.3L899.6,201.6z"/>
<path fill="#ebcb2a" d="M905.8,174.9L905.8,174.8L900,201z"/>
<path fill="#38300a" d="M904.1,176.4L902.6,178.2L897.6,204.3z"/>
<path fill="#e5c628" d="M778.4,242.2L780.7,248.8L781.9,237.4L779.6,230.9z"/>
<path fill="#ffe72f" d="M805.7,152.2L802.9,155.5L821.8,136.2L823.7,134.1z"/>
<path fill="#645612" d="M902.6,178.2L900.9,180.7L896.4,206.5z"/>
<path fill="#a68f1d" d="M748.8,238.5L751.4,246.6L767.8,251.1L765.4,243.8z"/>
<path fill="#ffe32e" d="M790.2,178.5L788.6,183.5L801.6,159.5L802.9,155.5z"/>
<path fill="#8a7718" d="M900.9,180.7L899.2,184L895.3,209.3z"/>
<path fill="#453b0c" d="M1008.5,254.3L1011.7,250.1L1007.2,241.6L1004,245.1z"/>
<path fill="#f7d52c" d="M1041,273.2L1043.4,266.4L1033.7,266.4L1031,272.7z"/>
<path fill="#9a851b" d="M888.8,403.1L899.8,399.1L899.1,392.7z"/>
<path fill="#907d1a" d="M888.8,403.1L899.1,392.7L886.1,396.3z"/>
<path fill="#eece2a" d="M980.9,229.2L984.5,227.6L977.5,229.9z"/>
<path fill="#eaca29" d="M980.9,229.2L977.5,229.9L973.8,231.3z"/>
<path fill="#7b6a16" d="M1067.9,295.7L1069.6,286.3L1067.8,279.3L1066,288.2z"/>
<path fill="#f8d62c" d="M781.9,206.4L782.1,212.4L788.9,188.9L788.6,183.5z"/>
<path fill="#aa931e" d="M899.2,184L897.8,187.9L894.6,212.6z"/>
<path fill="#52470e" d="M1004,245.1L1007.2,241.6L1000.7,234.1L997.3,236.9z"/>
<path fill="#dabc26" d="M1051.3,276.1L1053.4,268.6L1043.4,266.4L1041,273.2z"/>
<path fill="#cdb124" d="M989.2,231.2L992.7,229.1L984.5,227.6z"/>
<path fill="#c7ac23" d="M989.2,231.2L984.5,227.6L980.9,229.2z"/>
<path fill="#574b0f" d="M1066,288.2L1067.8,279.3L1062.1,273.1L1060.1,281.3z"/>
<path fill="#917d1a" d="M997.3,236.9L1000.7,234.1L992.7,229.1z"/>
<path fill="#8c7919" d="M997.3,236.9L992.7,229.1L989.2,231.2z"/>
<path fill="#a8911d" d="M1060.1,281.3L1062.1,273.1L1053.4,268.6L1051.3,276.1z"/>
<path fill="#a9921e" d="M899.8,399.1L911.1,394.4L912.3,388.3z"/>
<path fill="#a08a1c" d="M899.8,399.1L912.3,388.3L899.1,392.7z"/>
<path fill="#675912" d="M1008.8,280.7L1013.6,275.5L1012.3,274L1007.4,279.1z"/>
<path fill="#bea422" d="M725,233.6L727.9,242.9L751.4,246.6L748.8,238.5z"/>
<path fill="#352e09" d="M900.8,153.3L902.6,178.2L904.1,176.4z"/>
<path fill="#584c10" d="M900.8,153.3L899.5,155.6L902.6,178.2z"/>
<path fill="#52470e" d="M901.8,151.7L904.1,176.4L905.2,175.3z"/>
<path fill="#433a0c" d="M901.8,151.7L900.8,153.3L904.1,176.4z"/>
<path fill="#827017" d="M1007.4,279.1L1012.3,274L1011.8,269.8L1007,274.6z"/>
<path fill="#816f17" d="M902.3,151L905.2,175.3L905.8,174.8z"/>
<path fill="#3a320a" d="M902.3,151L901.8,151.7L905.2,175.3z"/>
<path fill="#55490f" d="M899.5,155.6L900.9,180.7L902.6,178.2z"/>
<path fill="#6e5f13" d="M899.5,155.6L898.1,158.7L900.9,180.7z"/>
<path fill="#ab931e" d="M902.2,150.9L905.8,174.8L905.8,174.9z"/>
<path fill="#e8c829" d="M779.6,230.9L781.9,237.4L784.3,218.7L782.1,212.4z"/>
<path fill="#ffe02e" d="M1012.1,280.4L1016.8,275L1013.6,275.5L1008.8,280.7z"/>
<path fill="#716214" d="M898.1,158.7L899.2,184L900.9,180.7z"/>
<path fill="#847217" d="M898.1,158.7L896.8,162.7L899.2,184z"/>
<path fill="#8a7718" d="M896.8,162.7L897.8,187.9L899.2,184z"/>
<path fill="#98831b" d="M896.8,162.7L895.7,167.4L897.8,187.9z"/>
<path fill="#7e6d16" d="M1007,274.6L1011.8,269.8L1010.9,263L1006.1,267.3z"/>
<path fill="#ffe22e" d="M1018,279.3L1022.7,273.6L1016.8,275L1012.1,280.4z"/>
<path fill="#9f891c" d="M895.7,167.4L896.9,192.5L897.8,187.9z"/>
<path fill="#a9921e" d="M895.7,167.4L895.2,172.8L896.9,192.5z"/>
<path fill="#ffff35" d="M777,252.9L781.5,259.7L785.1,255.5L780.7,248.8z"/>
<path fill="#ffe82f" d="M823.7,134.1L821.8,136.2L844.8,124.7z"/>
<path fill="#ffe32e" d="M823.7,134.1L844.8,124.7L845.8,123.7z"/>
<path fill="#fff131" d="M802.9,155.5L801.6,159.5L820.9,139.2L821.8,136.2z"/>
<path fill="#b69d20" d="M767.8,251.1L772.7,258.4L781.5,259.7L777,252.9z"/>
<path fill="#d4b726" d="M847.6,123.4L845.8,123.7L868.7,123.4z"/>
<path fill="#625511" d="M1006.1,267.3L1010.9,263L1008.5,254.3L1003.7,257.9z"/>
<path fill="#fcd92d" d="M621.3,286.9L624.1,302.3L628.8,281.9L626,267z"/>
<path fill="#ffea30" d="M788.6,183.5L788.9,188.9L802,164.2L801.6,159.5z"/>
<path fill="#e0c228" d="M696.5,232.6L699.5,243.4L727.9,242.9L725,233.6z"/>
<path fill="#e9c929" d="M780.7,248.8L785.1,255.5L786.3,244L781.9,237.4z"/>
<path fill="#ffde2d" d="M1026.4,278.7L1031,272.7L1022.7,273.6L1018,279.3z"/>
<path fill="#3b330a" d="M1003.7,257.9L1008.5,254.3L1004,245.1L999.1,247.8z"/>
<path fill="#c2a822" d="M984.1,232.3L989.2,231.2L980.9,229.2z"/>
<path fill="#baa121" d="M984.1,232.3L980.9,229.2L975.7,229.8z"/>
<path fill="#fedb2d" d="M782.1,212.4L784.3,218.7L791,194.8L788.9,188.9z"/>
<path fill="#5a4d10" d="M999.1,247.8L1004,245.1L997.3,236.9z"/>
<path fill="#574b0f" d="M999.1,247.8L997.3,236.9L992.3,238.7z"/>
<path fill="#a48e1d" d="M751.4,246.6L756.8,254.8L772.7,258.4L767.8,251.1z"/>
<path fill="#907c19" d="M992.3,238.7L997.3,236.9L989.2,231.2z"/>
<path fill="#8a7818" d="M992.3,238.7L989.2,231.2L984.1,232.3z"/>
<path fill="#ffe02e" d="M667.3,237.8L670.3,250.1L699.5,243.4L696.5,232.6z"/>
<path fill="#5a4d10" d="M889.3,133.5L901.8,151.7L902.3,151z"/>
<path fill="#39310a" d="M889.3,133.5L889.2,134.9L901.8,151.7z"/>
<path fill="#ffff34" d="M626,267L628.8,281.9L645.2,263.5L642.3,249.7z"/>
<path fill="#e6c729" d="M845.8,123.7L844.8,124.7L868.6,123.4z"/>
<path fill="#f4d22b" d="M1036.6,279.9L1041,273.2L1031,272.7L1026.4,278.7z"/>
<path fill="#dabc26" d="M1061.4,312.5L1065.4,302.5L1067.9,295.7L1064,305.4z"/>
<path fill="#483e0d" d="M889.2,134.9L900.8,153.3L901.8,151.7z"/>
<path fill="#3e360b" d="M889.2,134.9L888.8,137.1L900.8,153.3z"/>
<path fill="#706114" d="M1002.2,285.6L1008.8,280.7L1007.4,279.1L1000.9,283.7z"/>
<path fill="#342d09" d="M888.8,137.1L899.5,155.6L900.8,153.3z"/>
<path fill="#4a400d" d="M888.8,137.1L888.4,140.2L899.5,155.6z"/>
<path fill="#fff131" d="M821.8,136.2L820.9,139.2L844.5,126.4L844.8,124.7z"/>
<path fill="#736414" d="M1000.9,283.7L1007.4,279.1L1007,274.6L1000.4,278.9z"/>
<path fill="#433a0c" d="M888.4,140.2L898.1,158.7L899.5,155.6z"/>
<path fill="#584c10" d="M888.4,140.2L888.1,144.2L898.1,158.7z"/>
<path fill="#fff933" d="M642.3,249.7L645.2,263.5L670.3,250.1L667.3,237.8z"/>
<path fill="#fcda2d" d="M1005.5,285.4L1012.1,280.4L1008.8,280.7L1002.2,285.6z"/>
<path fill="#817017" d="M868.7,123.4L868.6,123.4L888.7,132.9z"/>
<path fill="#564b0f" d="M888.1,144.2L896.8,162.7L898.1,158.7z"/>
<path fill="#675912" d="M888.1,144.2L888,148.9L896.8,162.7z"/>
<path fill="#eccb2a" d="M781.9,237.4L786.3,244L788.6,225.3L784.3,218.7z"/>
<path fill="#42390c" d="M889.1,132.8L889.3,133.5L902.3,151z"/>
<path fill="#706114" d="M1000.4,278.9L1007,274.6L1006.1,267.3L999.5,271.1z"/>
<path fill="#fff933" d="M801.6,159.5L802,164.2L821.3,142.8L820.9,139.2z"/>
<path fill="#d9bb26" d="M1047.1,283.5L1051.3,276.1L1041,273.2L1036.6,279.9z"/>
<path fill="#685a12" d="M888,148.9L895.7,167.4L896.8,162.7z"/>
<path fill="#746414" d="M888,148.9L888.3,154.5L895.7,167.4z"/>
<path fill="#736314" d="M1064,305.4L1067.9,295.7L1066,288.2L1062.1,297.3z"/>
<path fill="#ebcb2a" d="M844.8,124.7L868.7,124.1L868.6,123.4z"/>
<path fill="#f5d42b" d="M844.8,124.7L844.5,126.4L868.7,124.1z"/>
<path fill="#776615" d="M888.3,154.5L895.2,172.8L895.7,167.4z"/>
<path fill="#7f6e16" d="M888.3,154.5L889.2,160.7L895.2,172.8z"/>
<path fill="#ffdc2d" d="M1011.4,284.5L1018,279.3L1012.1,280.4L1005.5,285.4z"/>
<path fill="#ab941e" d="M1056.1,289.5L1060.1,281.3L1051.3,276.1z"/>
<path fill="#a8911e" d="M1056.1,289.5L1051.3,276.1L1047.1,283.5z"/>
<path fill="#ffff35" d="M781.5,259.7L788.3,266.4L791.6,262.1L785.1,255.5z"/>
<path fill="#5e5111" d="M1062.1,297.3L1066,288.2L1060.1,281.3z"/>
<path fill="#5b4f10" d="M1062.1,297.3L1060.1,281.3L1056.1,289.5z"/>
<path fill="#55490f" d="M999.5,271.1L1006.1,267.3L1003.7,257.9L997.1,260.9z"/>
<path fill="#95811a" d="M868.6,123.4L868.7,124.1L889.1,132.8z"/>
<path fill="#bda321" d="M727.9,242.9L734,252.3L756.8,254.8L751.4,246.6z"/>
<path fill="#ffef31" d="M788.9,188.9L791,194.8L803.9,169.5L802,164.2z"/>
<path fill="#b69d20" d="M977.6,232.4L984.1,232.3L975.7,229.8z"/>
<path fill="#ac951e" d="M977.6,232.4L975.7,229.8L969.2,229.2z"/>
<path fill="#a18b1d" d="M868.7,124.1L868.9,125.6L889.3,133.5L889.1,132.8z"/>
<path fill="#b59d20" d="M772.7,258.4L779.9,265.6L788.3,266.4L781.5,259.7z"/>
<path fill="#827117" d="M889.2,160.7L895.5,178.7L895.2,172.8z"/>
<path fill="#887518" d="M889.2,160.7L890.9,167.4L895.5,178.7z"/>
<path fill="#332c09" d="M997.1,260.9L1003.7,257.9L999.1,247.8L992.5,249.8z"/>
<path fill="#fffa33" d="M820.9,139.2L821.3,142.8L844.9,129L844.5,126.4z"/>
<path fill="#e9c929" d="M785.1,255.5L791.6,262.1L792.7,250.6L786.3,244z"/>
<path fill="#aa931e" d="M868.9,125.6L889.2,134.9L889.3,133.5z"/>
<path fill="#a28c1d" d="M868.9,125.6L869.4,128L889.2,134.9z"/>
<path fill="#907c19" d="M985.7,239.7L992.3,238.7L984.1,232.3z"/>
<path fill="#897618" d="M985.7,239.7L984.1,232.3L977.6,232.4z"/>
<path fill="#8b7819" d="M890.9,167.4L896.7,185.2L895.5,178.7z"/>
<path fill="#615311" d="M992.5,249.8L999.1,247.8L992.3,238.7z"/>
<path fill="#5d5010" d="M992.5,249.8L992.3,238.7L985.7,239.7z"/>
<path fill="#fedb2d" d="M844.5,126.4L844.9,129L868.9,125.6L868.7,124.1z"/>
<path fill="#fbd92c" d="M1019.9,284.4L1026.4,278.7L1018,279.3L1011.4,284.5z"/>
<path fill="#ffde2d" d="M784.3,218.7L788.6,225.3L795,201.1L791,194.8z"/>
<path fill="#96821a" d="M869.4,128L870,131.1L888.8,137.1L889.2,134.9z"/>
<path fill="#7a6916" d="M993.9,290L1002.2,285.6L1000.9,283.7L992.6,287.9z"/>
<path fill="#635612" d="M992.6,287.9L1000.9,283.7L1000.4,278.9L992.2,282.7z"/>
<path fill="#7d6c16" d="M870,131.1L888.4,140.2L888.8,137.1z"/>
<path fill="#877418" d="M870,131.1L871,135.1L888.4,140.2z"/>
<path fill="#fffe34" d="M802,164.2L803.9,169.5L822.9,147.2L821.3,142.8z"/>
<path fill="#a48d1d" d="M756.8,254.8L765,262.8L779.9,265.6L772.7,258.4z"/>
<path fill="#f5d42b" d="M997.2,290L1005.5,285.4L1002.2,285.6L993.9,290z"/>
<path fill="#ffdf2d" d="M844.9,129L845.9,132.3L869.4,128L868.9,125.6z"/>
<path fill="#605311" d="M992.2,282.7L1000.4,278.9L999.5,271.1L991.3,274.2z"/>
<path fill="#665812" d="M871,135.1L888.1,144.2L888.4,140.2z"/>
<path fill="#746414" d="M871,135.1L872.3,139.9L888.1,144.2z"/>
<path fill="#eccc2a" d="M786.3,244L792.7,250.6L794.9,231.9L788.6,225.3z"/>
<path fill="#e0c128" d="M699.5,243.4L706.4,254.2L734,252.3L727.9,242.9z"/>
<path fill="#aa921e" d="M969.8,231.4L977.6,232.4L969.2,229.2z"/>
<path fill="#9e891c" d="M969.8,231.4L969.2,229.2L961.6,227.5z"/>
<path fill="#f0cf2a" d="M1030.1,286.2L1036.6,279.9L1026.4,278.7L1019.9,284.4z"/>
<path fill="#fffe34" d="M821.3,142.8L822.9,147.2L845.9,132.3L844.9,129z"/>
<path fill="#97821b" d="M631.9,321.1L640.3,336L632.6,317.6L624.1,302.3z"/>
<path fill="#52470e" d="M872.3,139.9L888,148.9L888.1,144.2z"/>
<path fill="#615411" d="M872.3,139.9L874.1,145.5L888,148.9z"/>
<path fill="#463c0c" d="M991.3,274.2L999.5,271.1L997.1,260.9L988.9,263.1z"/>
<path fill="#fff232" d="M791,194.8L795,201.1L807.4,175.2L803.9,169.5z"/>
<path fill="#ffff34" d="M788.3,266.4L797,272.9L800.1,268.4L791.6,262.1z"/>
<path fill="#f7d52c" d="M1003,289.4L1011.4,284.5L1005.5,285.4L997.2,290z"/>
<path fill="#41380b" d="M874.1,145.5L888.3,154.5L888,148.9z"/>
<path fill="#50450e" d="M874.1,145.5L876.6,151.7L888.3,154.5z"/>
<path fill="#fdda2d" d="M845.9,132.3L847.7,136.5L870,131.1L869.4,128z"/>
<path fill="#907c19" d="M977.8,239.6L985.7,239.7L977.6,232.4z"/>
<path fill="#887518" d="M977.8,239.6L977.6,232.4L969.8,231.4z"/>
<path fill="#cfb325" d="M1055.1,322.8L1061.4,312.5L1064,305.4L1057.7,315.3z"/>
<path fill="#40370b" d="M988.9,263.1L997.1,260.9L992.5,249.8L984.4,250.9z"/>
<path fill="#b59c20" d="M779.9,265.6L789.4,272.5L797,272.9L788.3,266.4z"/>
<path fill="#685a12" d="M984.4,250.9L992.5,249.8L985.7,239.7z"/>
<path fill="#645612" d="M984.4,250.9L985.7,239.7L977.8,239.6z"/>
<path fill="#d8bb26" d="M1040.6,290.7L1047.1,283.5L1036.6,279.9L1030.1,286.2z"/>
<path fill="#e7c829" d="M791.6,262.1L800.1,268.4L801.1,257.1L792.7,250.6z"/>
<path fill="#332c09" d="M876.6,151.7L889.2,160.7L888.3,154.5z"/>
<path fill="#42390c" d="M876.6,151.7L879.7,158.5L889.2,160.7z"/>
<path fill="#ffde2e" d="M788.6,225.3L794.9,231.9L800.9,207.7L795,201.1z"/>
<path fill="#ffff34" d="M803.9,169.5L807.4,175.2L825.6,152.2L822.9,147.2z"/>
<path fill="#bca321" d="M734,252.3L743.4,261.5L765,262.8L756.8,254.8z"/>
<path fill="#fffe34" d="M822.9,147.2L825.6,152.2L847.7,136.5L845.9,132.3z"/>
<path fill="#edcc2a" d="M847.7,136.5L871,135.1L870,131.1z"/>
<path fill="#f3d22b" d="M847.7,136.5L850.1,141.4L871,135.1z"/>
<path fill="#3c340b" d="M879.7,158.5L890.9,167.4L889.2,160.7z"/>
<path fill="#362f0a" d="M879.7,158.5L883.7,165.8L890.9,167.4z"/>
<path fill="#857317" d="M984,293.9L993.9,290L992.6,287.9L982.7,291.5z"/>
<path fill="#ffe02e" d="M670.3,250.1L677.9,262.5L706.4,254.2L699.5,243.4z"/>
<path fill="#695a12" d="M1057.7,315.3L1064,305.4L1062.1,297.3L1055.8,306.4z"/>
<path fill="#52470f" d="M982.7,291.5L992.6,287.9L992.2,282.7L982.3,285.9z"/>
<path fill="#9e881c" d="M961,229.2L969.8,231.4L961.6,227.5z"/>
<path fill="#917d1a" d="M961,229.2L961.6,227.5L953.2,224.7z"/>
<path fill="#ae961f" d="M1049.8,297.8L1056.1,289.5L1047.1,283.5z"/>
<path fill="#aa931e" d="M1049.8,297.8L1047.1,283.5L1040.6,290.7z"/>
<path fill="#f5d32b" d="M1011.3,289.7L1019.9,284.4L1011.4,284.5L1003,289.4z"/>
<path fill="#ffdc2d" d="M624.1,302.3L632.6,317.6L637.2,296.7L628.8,281.9z"/>
<path fill="#655712" d="M1055.8,306.4L1062.1,297.3L1056.1,289.5z"/>
<path fill="#615411" d="M1055.8,306.4L1056.1,289.5L1049.8,297.8z"/>
<path fill="#443b0c" d="M883.7,165.8L893.5,174.6L890.9,167.4z"/>
<path fill="#352e09" d="M883.7,165.8L888.6,173.4L893.5,174.6z"/>
<path fill="#eece2a" d="M987.1,294.1L997.2,290L993.9,290L984,293.9z"/>
<path fill="#4f440e" d="M982.3,285.9L992.2,282.7L991.3,274.2L981.5,276.6z"/>
<path fill="#eaca29" d="M792.7,250.6L801.1,257.1L803.1,238.5L794.9,231.9z"/>
<path fill="#d9bb26" d="M850.1,141.4L872.3,139.9L871,135.1z"/>
<path fill="#e5c528" d="M850.1,141.4L853.4,146.9L872.3,139.9z"/>
<path fill="#483e0d" d="M888.6,173.4L897.2,182.1L893.5,174.6z"/>
<path fill="#3a320a" d="M888.6,173.4L894.4,181.2L897.2,182.1z"/>
<path fill="#a48d1d" d="M765,262.8L775.7,270.5L789.4,272.5L779.9,265.6z"/>
<path fill="#fffa33" d="M645.2,263.5L653.3,277.2L677.9,262.5L670.3,250.1z"/>
<path fill="#fff231" d="M795,201.1L800.9,207.7L812.5,181.5L807.4,175.2z"/>
<path fill="#493f0d" d="M894.4,181.2L901.9,189.6L897.2,182.1z"/>
<path fill="#3b330a" d="M894.4,181.2L901.2,188.9L901.9,189.6z"/>
<path fill="#907d1a" d="M968.6,238.6L977.8,239.6L969.8,231.4z"/>
<path fill="#877518" d="M968.6,238.6L969.8,231.4L961,229.2z"/>
<path fill="#362f0a" d="M981.5,276.6L991.3,274.2L988.9,263.1L979.2,264.5z"/>
<path fill="#ffff35" d="M628.8,281.9L637.2,296.7L653.3,277.2L645.2,263.5z"/>
<path fill="#fffb33" d="M797,272.9L807.7,279L810.4,274.5L800.1,268.4z"/>
<path fill="#fffa33" d="M825.6,152.2L829.6,157.9L850.1,141.4L847.7,136.5z"/>
<path fill="#857318" d="M951.4,226.1L953.2,224.7L944.3,220.8z"/>
<path fill="#937f1a" d="M951.4,226.1L961,229.2L953.2,224.7z"/>
<path fill="#c4a923" d="M853.4,146.9L874.1,145.5L872.3,139.9z"/>
<path fill="#d4b726" d="M853.4,146.9L857.5,153.1L874.1,145.5z"/>
<path fill="#eece2a" d="M992.7,293.7L1003,289.4L997.2,290L987.1,294.1z"/>
<path fill="#4d430d" d="M979.2,264.5L988.9,263.1L984.4,250.9L974.9,251.1z"/>
<path fill="#716214" d="M974.9,251.1L984.4,250.9L977.8,239.6z"/>
<path fill="#6c5e13" d="M974.9,251.1L977.8,239.6L968.6,238.6z"/>
<path fill="#fffe34" d="M807.4,175.2L812.5,181.5L829.6,157.9L825.6,152.2z"/>
<path fill="#eccc2a" d="M1021.4,292.3L1030.1,286.2L1019.9,284.4L1011.3,289.7z"/>
<path fill="#b59d20" d="M789.4,272.5L801,279L807.7,279L797,272.9z"/>
<path fill="#e2c428" d="M800.1,268.4L810.4,274.5L811.3,263.3L801.1,257.1z"/>
<path fill="#927e1a" d="M972.5,297.1L984,293.9L982.7,291.5L971.3,294.5z"/>
<path fill="#ffdc2d" d="M794.9,231.9L803.1,238.5L808.6,214.4L800.9,207.7z"/>
<path fill="#40370b" d="M971.3,294.5L982.7,291.5L982.3,285.9L971,288.4z"/>
<path fill="#b0981f" d="M857.5,153.1L876.6,151.7L874.1,145.5z"/>
<path fill="#c3a923" d="M857.5,153.1L862.5,159.9L876.6,151.7z"/>
<path fill="#dfc127" d="M706.4,254.2L717.2,264.8L743.4,261.5L734,252.3z"/>
<path fill="#7b6a16" d="M941.2,221.9L944.3,220.8L935.1,215.9z"/>
<path fill="#8a7718" d="M941.2,221.9L951.4,226.1L944.3,220.8z"/>
<path fill="#fff131" d="M829.6,157.9L853.4,146.9L850.1,141.4z"/>
<path fill="#fff532" d="M829.6,157.9L834.7,164L853.4,146.9z"/>
<path fill="#3d340b" d="M971,288.4L982.3,285.9L981.5,276.6L970.2,278.3z"/>
<path fill="#e7c829" d="M975.4,297.5L987.1,294.1L984,293.9L972.5,297.1z"/>
<path fill="#9e881c" d="M862.5,159.9L879.7,158.5L876.6,151.7z"/>
<path fill="#b39a20" d="M862.5,159.9L868.3,167L879.7,158.5z"/>
<path fill="#927e1a" d="M958.3,236.5L968.6,238.6L961,229.2z"/>
<path fill="#887618" d="M958.3,236.5L961,229.2L951.4,226.1z"/>
<path fill="#e5c629" d="M801.1,257.1L811.3,263.3L813.1,245L803.1,238.5z"/>
<path fill="#d9bb26" d="M1031.8,297.7L1040.6,290.7L1030.1,286.2z"/>
<path fill="#d6b926" d="M1031.8,297.7L1030.1,286.2L1021.4,292.3z"/>
<path fill="#eece2a" d="M1000.7,294.5L1011.3,289.7L1003,289.4L992.7,293.7z"/>
<path fill="#ffef31" d="M800.9,207.7L808.6,214.4L819.2,188L812.5,181.5z"/>
<path fill="#c4a922" d="M1046.1,333.2L1055.1,322.8L1057.7,315.3L1048.7,325.3z"/>
<path fill="#bca221" d="M743.4,261.5L755.9,270.3L775.7,270.5L765,262.8z"/>
<path fill="#3e350b" d="M970.2,278.3L981.5,276.6L979.2,264.5L968.1,265.1z"/>
<path fill="#fff532" d="M807.7,279L820.1,284.6L822.4,280.1L810.4,274.5z"/>
<path fill="#746414" d="M930.8,216.8L935.1,215.9L925.9,210.1z"/>
<path fill="#837117" d="M930.8,216.8L941.2,221.9L935.1,215.9z"/>
<path fill="#fffb33" d="M812.5,181.5L819.2,188L834.7,164L829.6,157.9z"/>
<path fill="#8e7b19" d="M868.3,167L883.7,165.8L879.7,158.5z"/>
<path fill="#a48d1d" d="M868.3,167L875.1,174.5L883.7,165.8z"/>
<path fill="#a48e1d" d="M775.7,270.5L788.8,277.7L801,279L789.4,272.5z"/>
<path fill="#7b6a16" d="M964.1,250.4L974.9,251.1L968.6,238.6z"/>
<path fill="#766615" d="M964.1,250.4L968.6,238.6L958.3,236.5z"/>
<path fill="#5d5010" d="M968.1,265.1L979.2,264.5L974.9,251.1z"/>
<path fill="#5a4e10" d="M968.1,265.1L974.9,251.1L964.1,250.4z"/>
<path fill="#ffe62f" d="M834.7,164L857.5,153.1L853.4,146.9z"/>
<path fill="#ffec30" d="M834.7,164L841.1,170.7L857.5,153.1z"/>
<path fill="#dbbd27" d="M810.4,274.5L822.4,280.1L823.2,269.1L811.3,263.3z"/>
<path fill="#827017" d="M875.1,174.5L888.6,173.4L883.7,165.8z"/>
<path fill="#97821b" d="M875.1,174.5L882.7,182.1L888.6,173.4z"/>
<path fill="#b69d20" d="M801,279L814.4,285L820.1,284.6L807.7,279z"/>
<path fill="#e6c629" d="M980.5,297.4L992.7,293.7L987.1,294.1L975.4,297.5z"/>
<path fill="#6e5f14" d="M920.4,210.8L925.9,210.1L917.1,203.6z"/>
<path fill="#7f6e16" d="M920.4,210.8L930.8,216.8L925.9,210.1z"/>
<path fill="#9e891c" d="M959.6,299.7L972.5,297.1L971.3,294.5L958.6,296.8z"/>
<path fill="#362f0a" d="M958.6,296.8L971.3,294.5L971,288.4L958.2,290.1z"/>
<path fill="#b1991f" d="M1040.8,305.8L1049.8,297.8L1040.6,290.7z"/>
<path fill="#ae961f" d="M1040.8,305.8L1040.6,290.7L1031.8,297.7z"/>
<path fill="#5e5110" d="M1048.7,325.3L1057.7,315.3L1055.8,306.4L1046.8,315.6z"/>
<path fill="#786715" d="M882.7,182.1L894.4,181.2L888.6,173.4z"/>
<path fill="#8c7919" d="M882.7,182.1L891.2,189.7L894.4,181.2z"/>
<path fill="#fad82c" d="M803.1,238.5L813.1,245L818,221.1L808.6,214.4z"/>
<path fill="#6c5d13" d="M910.1,204.3L917.1,203.6L908.8,196.5z"/>
<path fill="#7e6d16" d="M910.1,204.3L920.4,210.8L917.1,203.6z"/>
<path fill="#8a7818" d="M947.3,233.5L951.4,226.1L941.2,221.9z"/>
<path fill="#95811a" d="M947.3,233.5L958.3,236.5L951.4,226.1z"/>
<path fill="#6d5e13" d="M1046.8,315.6L1055.8,306.4L1049.8,297.8z"/>
<path fill="#695a12" d="M1046.8,315.6L1049.8,297.8L1040.8,305.8z"/>
<path fill="#716114" d="M891.2,189.7L901.2,188.9L894.4,181.2z"/>
<path fill="#857217" d="M891.2,189.7L900.4,197.2L901.2,188.9z"/>
<path fill="#6d5e13" d="M900.4,197.2L908.8,196.5L901.2,188.9z"/>
<path fill="#806e17" d="M900.4,197.2L910.1,204.3L908.8,196.5z"/>
<path fill="#39310a" d="M958.2,290.1L971,288.4L970.2,278.3L957.6,279.2z"/>
<path fill="#e0c228" d="M962.1,300.2L975.4,297.5L972.5,297.1L959.6,299.7z"/>
<path fill="#96821b" d="M640.3,336L654.1,350.2L646.7,332.1L632.6,317.6z"/>
<path fill="#ffe02e" d="M677.9,262.5L690.1,274.5L717.2,264.8L706.4,254.2z"/>
<path fill="#fbd92c" d="M841.1,170.7L862.5,159.9L857.5,153.1z"/>
<path fill="#ffe12e" d="M841.1,170.7L848.5,177.6L862.5,159.9z"/>
<path fill="#e9c929" d="M1010.3,297.8L1021.4,292.3L1011.3,289.7L1000.7,294.5z"/>
<path fill="#dec027" d="M811.3,263.3L823.2,269.1L824.7,251.3L813.1,245z"/>
<path fill="#fff432" d="M819.2,188L827.4,194.8L841.1,170.7L834.7,164z"/>
<path fill="#ffea30" d="M808.6,214.4L818,221.1L827.4,194.8L819.2,188z"/>
<path fill="#ffee31" d="M820.1,284.6L834,289.6L835.9,285.1L822.4,280.1z"/>
<path fill="#50450e" d="M957.6,279.2L970.2,278.3L968.1,265.1L955.8,264.8z"/>
<path fill="#867418" d="M952.3,248.7L964.1,250.4L958.3,236.5z"/>
<path fill="#816f17" d="M952.3,248.7L958.3,236.5L947.3,233.5z"/>
<path fill="#8e7b19" d="M935.6,229.5L941.2,221.9L930.8,216.8z"/>
<path fill="#9a851b" d="M935.6,229.5L947.3,233.5L941.2,221.9z"/>
<path fill="#6c5e13" d="M955.8,264.8L968.1,265.1L964.1,250.4z"/>
<path fill="#6a5b13" d="M955.8,264.8L964.1,250.4L952.3,248.7z"/>
<path fill="#d1b525" d="M822.4,280.1L835.9,285.1L836.5,274.5L823.2,269.1z"/>
<path fill="#ac941e" d="M945.4,301.5L959.6,299.7L958.6,296.8L944.6,298.3z"/>
<path fill="#4a400d" d="M944.6,298.3L958.6,296.8L958.2,290.1L944.4,291.1z"/>
<path fill="#ebcb2a" d="M848.5,177.6L868.3,167L862.5,159.9z"/>
<path fill="#f6d52c" d="M848.5,177.6L857,184.8L868.3,167z"/>
<path fill="#b89e20" d="M814.4,285L829.3,290.2L834,289.6L820.1,284.6z"/>
<path fill="#a68f1d" d="M788.8,277.7L804,284.3L814.4,285L801,279z"/>
<path fill="#e8c829" d="M987.9,298.7L1000.7,294.5L992.7,293.7L980.5,297.4z"/>
<path fill="#f2d12b" d="M813.1,245L824.7,251.3L828.9,227.7L818,221.1z"/>
<path fill="#debf27" d="M966.6,300.4L980.5,297.4L975.4,297.5L962.1,300.2z"/>
<path fill="#4d420e" d="M944.4,291.1L958.2,290.1L957.6,279.2L943.8,279.3z"/>
<path fill="#dfc027" d="M717.2,264.8L731.8,274.9L755.9,270.3L743.4,261.5z"/>
<path fill="#bca321" d="M755.9,270.3L771.2,278.6L788.8,277.7L775.7,270.5z"/>
<path fill="#ffea30" d="M827.4,194.8L848.5,177.6L841.1,170.7z"/>
<path fill="#ffed31" d="M827.4,194.8L836.9,201.7L848.5,177.6z"/>
<path fill="#94801a" d="M923.6,224.7L930.8,216.8L920.4,210.8z"/>
<path fill="#a08a1c" d="M923.6,224.7L935.6,229.5L930.8,216.8z"/>
<path fill="#dabc26" d="M947.4,302.2L962.1,300.2L959.6,299.7L945.4,301.5z"/>
<path fill="#dbbd27" d="M857,184.8L875.1,174.5L868.3,167z"/>
<path fill="#e8c829" d="M857,184.8L866.5,192.1L875.1,174.5z"/>
<path fill="#fffa33" d="M653.3,277.2L666.6,290.6L690.1,274.5L677.9,262.5z"/>
<path fill="#ffdc2d" d="M632.6,317.6L646.7,332.1L651.2,311L637.2,296.7z"/>
<path fill="#ffe52f" d="M834,289.6L849,293.9L850.4,289.4L835.9,285.1z"/>
<path fill="#d4b725" d="M823.2,269.1L836.5,274.5L837.7,257.1L824.7,251.3z"/>
<path fill="#d9bb26" d="M1020.3,304.3L1031.8,297.7L1021.4,292.3z"/>
<path fill="#d6b926" d="M1020.3,304.3L1021.4,292.3L1010.3,297.8z"/>
<path fill="#ffe32e" d="M818,221.1L828.9,227.7L836.9,201.7L827.4,194.8z"/>
<path fill="#625511" d="M943.8,279.3L957.6,279.2L955.8,264.8L942.4,263.7z"/>
<path fill="#937f1a" d="M939.6,246.1L952.3,248.7L947.3,233.5z"/>
<path fill="#8c7919" d="M939.6,246.1L947.3,233.5L935.6,229.5z"/>
<path fill="#baa021" d="M930.3,302.4L945.4,301.5L944.6,298.3L929.7,299z"/>
<path fill="#5d5110" d="M929.7,299L944.6,298.3L944.4,291.1L929.5,291.2z"/>
<path fill="#cbb024" d="M866.5,192.1L882.7,182.1L875.1,174.5z"/>
<path fill="#d9bb26" d="M866.5,192.1L876.9,199.3L882.7,182.1z"/>
<path fill="#c5aa23" d="M835.9,285.1L850.4,289.4L850.9,279.2L836.5,274.5z"/>
<path fill="#9c861b" d="M911.5,219.2L920.4,210.8L910.1,204.3z"/>
<path fill="#a9921e" d="M911.5,219.2L923.6,224.7L920.4,210.8z"/>
<path fill="#ffff34" d="M637.2,296.7L651.2,311L666.6,290.6L653.3,277.2z"/>
<path fill="#7d6c16" d="M942.4,263.7L955.8,264.8L952.3,248.7z"/>
<path fill="#7a6916" d="M942.4,263.7L952.3,248.7L939.6,246.1z"/>
<path fill="#b69d20" d="M1034.1,343.8L1046.1,333.2L1048.7,325.3L1036.6,335.3z"/>
<path fill="#baa021" d="M829.3,290.2L845.5,294.7L849,293.9L834,289.6z"/>
<path fill="#bda321" d="M876.9,199.3L891.2,189.7L882.7,182.1z"/>
<path fill="#cbaf24" d="M876.9,199.3L887.9,206.3L891.2,189.7z"/>
<path fill="#a58e1d" d="M899.5,213L910.1,204.3L900.4,197.2z"/>
<path fill="#b29a20" d="M899.5,213L911.5,219.2L910.1,204.3z"/>
<path fill="#b0981f" d="M887.9,206.3L900.4,197.2L891.2,189.7z"/>
<path fill="#bea422" d="M887.9,206.3L899.5,213L900.4,197.2z"/>
<path fill="#ffdf2e" d="M836.9,201.7L857,184.8L848.5,177.6z"/>
<path fill="#ffe32e" d="M836.9,201.7L847.6,208.6L857,184.8z"/>
<path fill="#605311" d="M929.5,291.2L944.4,291.1L943.8,279.3L929.2,278.5z"/>
<path fill="#fedb2d" d="M849,293.9L864.9,297.3L865.9,293L850.4,289.4z"/>
<path fill="#e8c829" d="M824.7,251.3L837.7,257.1L841.1,234.1L828.9,227.7z"/>
<path fill="#a8911e" d="M804,284.3L820.8,290.1L829.3,290.2L814.4,285z"/>
<path fill="#d3b725" d="M931.6,303.3L947.4,302.2L945.4,301.5L930.3,302.4z"/>
<path fill="#c8ac23" d="M914.3,302.5L930.3,302.4L929.7,299L914.1,298.8z"/>
<path fill="#716114" d="M914.1,298.8L929.7,299L929.5,291.2L914,290.5z"/>
<path fill="#b69d20" d="M1029,313.7L1040.8,305.8L1031.8,297.7z"/>
<path fill="#b29a1f" d="M1029,313.7L1031.8,297.7L1020.3,304.3z"/>
<path fill="#c8ad23" d="M836.5,274.5L850.9,279.2L851.9,262.4L837.7,257.1z"/>
<path fill="#d5b826" d="M951,302.6L966.6,300.4L962.1,300.2L947.4,302.2z"/>
<path fill="#e5c628" d="M996.8,302.9L1010.3,297.8L1000.7,294.5L987.9,298.7z"/>
<path fill="#b79e20" d="M850.4,289.4L865.9,293L866.2,283.2L850.9,279.2z"/>
<path fill="#99841b" d="M926.3,242.7L935.6,229.5L923.6,224.7z"/>
<path fill="#a08a1c" d="M926.3,242.7L939.6,246.1L935.6,229.5z"/>
<path fill="#fcd92c" d="M828.9,227.7L841.1,234.1L847.6,208.6L836.9,201.7z"/>
<path fill="#756515" d="M929.2,278.5L943.8,279.3L942.4,263.7L928.2,261.7z"/>
<path fill="#51460e" d="M1036.6,335.3L1048.7,325.3L1046.8,315.6L1034.8,324.6z"/>
<path fill="#e2c328" d="M973,302.2L987.9,298.7L980.5,297.4L966.6,300.4z"/>
<path fill="#f1d02b" d="M864.9,297.3L881.3,299.9L881.9,295.8L865.9,293z"/>
<path fill="#f4d22b" d="M847.6,208.6L866.5,192.1L857,184.8z"/>
<path fill="#f9d72c" d="M847.6,208.6L859.3,215.4L866.5,192.1z"/>
<path fill="#bca321" d="M845.5,294.7L862.5,298.3L864.9,297.3L849,293.9z"/>
<path fill="#766615" d="M1034.8,324.6L1046.8,315.6L1040.8,305.8z"/>
<path fill="#716214" d="M1034.8,324.6L1040.8,305.8L1029,313.7z"/>
<path fill="#8e7a19" d="M928.2,261.7L942.4,263.7L939.6,246.1z"/>
<path fill="#8b7819" d="M928.2,261.7L939.6,246.1L926.3,242.7z"/>
<path fill="#736414" d="M914,290.5L929.5,291.2L929.2,278.5L913.9,276.9z"/>
<path fill="#847217" d="M898,297.7L914.1,298.8L914,290.5L898.1,288.9z"/>
<path fill="#d6b926" d="M897.9,301.7L914.3,302.5L914.1,298.8L898,297.7z"/>
<path fill="#a7901e" d="M865.9,293L881.9,295.8L882,286.5L866.2,283.2z"/>
<path fill="#e4c528" d="M881.3,299.9L897.9,301.7L898,297.7L881.9,295.8z"/>
<path fill="#cdb124" d="M914.9,303.5L931.6,303.3L930.3,302.4L914.3,302.5z"/>
<path fill="#96821b" d="M881.9,295.8L898,297.7L898.1,288.9L882,286.5z"/>
<path fill="#bda321" d="M771.2,278.6L788.9,286L804,284.3L788.8,277.7z"/>
<path fill="#baa021" d="M850.9,279.2L866.2,283.2L866.8,267.1L851.9,262.4z"/>
<path fill="#a7901e" d="M912.7,238.5L923.6,224.7L911.5,219.2z"/>
<path fill="#ae961f" d="M912.7,238.5L926.3,242.7L923.6,224.7z"/>
<path fill="#dbbd27" d="M837.7,257.1L851.9,262.4L854.4,240.2L841.1,234.1z"/>
<path fill="#e5c528" d="M859.3,215.4L876.9,199.3L866.5,192.1z"/>
<path fill="#ebcb29" d="M859.3,215.4L872,221.9L876.9,199.3z"/>
<path fill="#c0a522" d="M862.5,298.3L880,301L881.3,299.9L864.9,297.3z"/>
<path fill="#ffdf2e" d="M690.1,274.5L706.7,286L731.8,274.9L717.2,264.8z"/>
<path fill="#867418" d="M898.1,288.9L914,290.5L913.9,276.9L898.2,274.5z"/>
<path fill="#efce2a" d="M841.1,234.1L854.4,240.2L859.3,215.4L847.6,208.6z"/>
<path fill="#887518" d="M913.9,276.9L929.2,278.5L928.2,261.7L913.4,258.8z"/>
<path fill="#c8ad23" d="M897.6,302.7L914.9,303.5L914.3,302.5L897.9,301.7z"/>
<path fill="#ebcb2a" d="M1012.9,358.9L1027.7,348.6L1034.1,343.8z"/>
<path fill="#e8c929" d="M1012.9,358.9L1034.1,343.8L1018.8,354.1z"/>
<path fill="#ab941e" d="M820.8,290.1L839,295L845.5,294.7L829.3,290.2z"/>
<path fill="#aa931e" d="M866.2,283.2L882,286.5L882.4,271.2L866.8,267.1z"/>
<path fill="#b69d20" d="M898.9,233.5L911.5,219.2L899.5,213z"/>
<path fill="#bda321" d="M898.9,233.5L912.7,238.5L911.5,219.2z"/>
<path fill="#c4a923" d="M880,301L897.6,302.7L897.9,301.7L881.3,299.9z"/>
<path fill="#ceb224" d="M934,303.9L951,302.6L947.4,302.2L931.6,303.3z"/>
<path fill="#d5b826" d="M872,221.9L887.9,206.3L876.9,199.3z"/>
<path fill="#dcbe27" d="M872,221.9L885.2,228L887.9,206.3z"/>
<path fill="#99841b" d="M882,286.5L898.1,288.9L898.2,274.5L882.4,271.2z"/>
<path fill="#9f891c" d="M913.4,258.8L928.2,261.7L926.3,242.7z"/>
<path fill="#9c871c" d="M913.4,258.8L926.3,242.7L912.7,238.5z"/>
<path fill="#c5aa23" d="M885.2,228L899.5,213L887.9,206.3z"/>
<path fill="#ccb024" d="M885.2,228L898.9,233.5L899.5,213z"/>
<path fill="#dec027" d="M731.8,274.9L749.7,284.3L771.2,278.6L755.9,270.3z"/>
<path fill="#cdb124" d="M851.9,262.4L866.8,267.1L868.6,245.8L854.4,240.2z"/>
<path fill="#9a851b" d="M898.2,274.5L913.9,276.9L913.4,258.8L898.4,255.2z"/>
<path fill="#dfc127" d="M854.4,240.2L872,221.9L859.3,215.4z"/>
<path fill="#e2c328" d="M854.4,240.2L868.6,245.8L872,221.9z"/>
<path fill="#dabc26" d="M1006.1,310.5L1020.3,304.3L1010.3,297.8z"/>
<path fill="#d7b926" d="M1006.1,310.5L1010.3,297.8L996.8,302.9z"/>
<path fill="#bda321" d="M866.8,267.1L882.4,271.2L883.4,250.8L868.6,245.8z"/>
<path fill="#b0981f" d="M898.4,255.2L913.4,258.8L912.7,238.5z"/>
<path fill="#ad961f" d="M898.4,255.2L912.7,238.5L898.9,233.5z"/>
<path fill="#ac941e" d="M882.4,271.2L898.2,274.5L898.4,255.2L883.4,250.8z"/>
<path fill="#dcbe27" d="M956.2,304.9L973,302.2L966.6,300.4L951,302.6z"/>
<path fill="#cfb325" d="M868.6,245.8L885.2,228L872,221.9z"/>
<path fill="#d2b525" d="M868.6,245.8L883.4,250.8L885.2,228z"/>
<path fill="#af971f" d="M839,295L858.1,298.9L862.5,298.3L845.5,294.7z"/>
<path fill="#c6ab23" d="M915.9,304.2L934,303.9L931.6,303.3L914.9,303.5z"/>
<path fill="#937f1a" d="M654.1,350.2L673.2,363.2L666.4,345.6L646.7,332.1z"/>
<path fill="#bea422" d="M883.4,250.8L898.9,233.5L885.2,228z"/>
<path fill="#c1a722" d="M883.4,250.8L898.4,255.2L898.9,233.5z"/>
<path fill="#e2c328" d="M980.8,307.2L996.8,302.9L987.9,298.7L973,302.2z"/>
<path fill="#bea422" d="M788.9,286L808.6,292.5L820.8,290.1L804,284.3z"/>
<path fill="#c0a622" d="M896.9,303.5L915.9,304.2L914.9,303.5L897.6,302.7z"/>
<path fill="#b49b20" d="M858.1,298.9L877.5,301.7L880,301L862.5,298.3z"/>
<path fill="#a7901d" d="M1018.8,354.1L1034.1,343.8L1036.6,335.3L1021.2,345.1z"/>
<path fill="#baa021" d="M877.5,301.7L896.9,303.5L897.6,302.7L880,301z"/>
<path fill="#fff833" d="M666.6,290.6L684.9,303.2L706.7,286L690.1,274.5z"/>
<path fill="#bba221" d="M1014.2,321.1L1029,313.7L1020.3,304.3z"/>
<path fill="#b79e20" d="M1014.2,321.1L1020.3,304.3L1006.1,310.5z"/>
<path fill="#d6b926" d="M937.5,306.6L956.2,304.9L951,302.6L934,303.9z"/>
<path fill="#fbd82c" d="M646.7,332.1L666.4,345.6L670.5,324.2L651.2,311z"/>
<path fill="#42390b" d="M1021.2,345.1L1036.6,335.3L1034.8,324.6L1019.6,333.4z"/>
<path fill="#816f17" d="M1019.6,333.4L1034.8,324.6L1029,313.7z"/>
<path fill="#7c6b16" d="M1019.6,333.4L1029,313.7L1014.2,321.1z"/>
<path fill="#fffd34" d="M651.2,311L670.5,324.2L684.9,303.2L666.6,290.6z"/>
<path fill="#ddbf27" d="M749.7,284.3L770.5,292.7L788.9,286L771.2,278.6z"/>
<path fill="#c0a622" d="M808.6,292.5L829.7,297.9L839,295L820.8,290.1z"/>
<path fill="#4c420d" d="M689.5,373.9L711.8,384.1L697.2,374.4L673.2,363.2z"/>
<path fill="#dfc027" d="M994.9,368.9L1012.9,358.9L1018.8,354.1z"/>
<path fill="#dcbe27" d="M994.9,368.9L1018.8,354.1L1000.2,364.1z"/>
<path fill="#ffdd2d" d="M706.7,286L727.3,296.5L749.7,284.3L731.8,274.9z"/>
<path fill="#e0c127" d="M962.4,310.7L980.8,307.2L973,302.2L956.2,304.9z"/>
<path fill="#d1b525" d="M917.4,307.2L937.5,306.6L934,303.9L915.9,304.2z"/>
<path fill="#dbbd27" d="M989,316L1006.1,310.5L996.8,302.9z"/>
<path fill="#d8bb26" d="M989,316L996.8,302.9L980.8,307.2z"/>
<path fill="#c2a822" d="M829.7,297.9L851.7,302.1L858.1,298.9L839,295z"/>
<path fill="#cdb124" d="M896.1,306.7L917.4,307.2L915.9,304.2L896.9,303.5z"/>
<path fill="#c5aa23" d="M851.7,302.1L874,305L877.5,301.7L858.1,298.9z"/>
<path fill="#c9ad23" d="M874,305L896.1,306.7L896.9,303.5L877.5,301.7z"/>
<path fill="#97821a" d="M1000.2,364.1L1018.8,354.1L1021.2,345.1L1002.3,354.4z"/>
<path fill="#dcbe27" d="M770.5,292.7L793.6,299.9L808.6,292.5L788.9,286z"/>
<path fill="#debf27" d="M941.8,313.1L962.4,310.7L956.2,304.9L937.5,306.6z"/>
<path fill="#c2a722" d="M996.1,328L1014.2,321.1L1006.1,310.5z"/>
<path fill="#bea421" d="M996.1,328L1006.1,310.5L989,316z"/>
<path fill="#8c7919" d="M673.2,363.2L697.2,374.4L691.1,357.4L666.4,345.6z"/>
<path fill="#fff532" d="M684.9,303.2L707.7,314.6L727.3,296.5L706.7,286z"/>
<path fill="#d1b525" d="M973.8,378.2L994.9,368.9L1000.2,364.1z"/>
<path fill="#ceb224" d="M973.8,378.2L1000.2,364.1L978,373.3z"/>
<path fill="#332c09" d="M1002.3,354.4L1021.2,345.1L1019.6,333.4L1000.8,341.6z"/>
<path fill="#8d7a19" d="M1000.8,341.6L1019.6,333.4L1014.2,321.1z"/>
<path fill="#887518" d="M1000.8,341.6L1014.2,321.1L996.1,328z"/>
<path fill="#dabc27" d="M969,320.6L980.8,307.2L962.4,310.7z"/>
<path fill="#ddbf27" d="M969,320.6L989,316L980.8,307.2z"/>
<path fill="#fddb2d" d="M727.3,296.5L751.2,305.7L770.5,292.7L749.7,284.3z"/>
<path fill="#dcbe27" d="M793.6,299.9L818.3,305.7L829.7,297.9L808.6,292.5z"/>
<path fill="#dcbe27" d="M919.2,314.4L941.8,313.1L937.5,306.6L917.4,307.2z"/>
<path fill="#554a0f" d="M711.8,384.1L737.8,392.4L725.3,383.7z"/>
<path fill="#52470f" d="M711.8,384.1L725.3,383.7L697.2,374.4z"/>
<path fill="#f3d22b" d="M666.4,345.6L691.1,357.4L694.8,336.2L670.5,324.2z"/>
<path fill="#fff833" d="M670.5,324.2L694.8,336.2L707.7,314.6L684.9,303.2z"/>
<path fill="#dbbd27" d="M895,314.4L919.2,314.4L917.4,307.2L896.1,306.7z"/>
<path fill="#dbbd27" d="M818.3,305.7L843.9,310.1L851.7,302.1L829.7,297.9z"/>
<path fill="#867318" d="M978,373.3L1000.2,364.1L1002.3,354.4z"/>
<path fill="#837217" d="M978,373.3L1002.3,354.4L979.7,363z"/>
<path fill="#dbbd27" d="M869.7,313L895,314.4L896.1,306.7L874,305z"/>
<path fill="#dbbd27" d="M843.9,310.1L869.7,313L874,305L851.7,302.1z"/>
<path fill="#c9ae24" d="M974.7,334L996.1,328L989,316z"/>
<path fill="#c5aa23" d="M974.7,334L989,316L969,320.6z"/>
<path fill="#ddbf27" d="M946.3,324.2L962.4,310.7L941.8,313.1z"/>
<path fill="#e0c128" d="M946.3,324.2L969,320.6L962.4,310.7z"/>
<path fill="#c3a922" d="M949.5,386.6L973.8,378.2L978,373.3z"/>
<path fill="#bfa522" d="M949.5,386.6L978,373.3L952.4,381.5z"/>
<path fill="#fad82c" d="M751.2,305.7L777.8,313.5L793.6,299.9L770.5,292.7z"/>
<path fill="#fff031" d="M707.7,314.6L734.4,324.5L751.2,305.7L727.3,296.5z"/>
<path fill="#443b0c" d="M979.7,363L1002.3,354.4L1000.8,341.6L978.5,349z"/>
<path fill="#9a851b" d="M978.5,349L1000.8,341.6L996.1,328z"/>
<path fill="#95811a" d="M978.5,349L996.1,328L974.7,334z"/>
<path fill="#827017" d="M697.2,374.4L725.3,383.7L720,367.4L691.1,357.4z"/>
<path fill="#5f5211" d="M737.8,392.4L766.8,398.5L756.6,390.7z"/>
<path fill="#5c4f10" d="M737.8,392.4L756.6,390.7L725.3,383.7z"/>
<path fill="#e0c228" d="M921.1,326.5L941.8,313.1L919.2,314.4z"/>
<path fill="#e3c428" d="M921.1,326.5L946.3,324.2L941.8,313.1z"/>
<path fill="#f6d52c" d="M777.8,313.5L806.3,319.6L818.3,305.7L793.6,299.9z"/>
<path fill="#b49c20" d="M922.5,393.6L949.5,386.6L952.4,381.5z"/>
<path fill="#b0981f" d="M922.5,393.6L952.4,381.5L923.7,388.4z"/>
<path fill="#fff131" d="M694.8,336.2L723.2,346.3L734.4,324.5L707.7,314.6z"/>
<path fill="#716214" d="M952.4,381.5L978,373.3L979.7,363L953.6,370.5z"/>
<path fill="#d2b525" d="M950.2,338.9L974.7,334L969,320.6z"/>
<path fill="#ceb124" d="M950.2,338.9L969,320.6L946.3,324.2z"/>
<path fill="#e9c929" d="M691.1,357.4L720,367.4L723.2,346.3L694.8,336.2z"/>
<path fill="#e5c628" d="M893.9,327.3L921.1,326.5L919.2,314.4L895,314.4z"/>
<path fill="#6b5c13" d="M766.8,398.5L797.8,402.1L790,395.1z"/>
<path fill="#675912" d="M766.8,398.5L790,395.1L756.6,390.7z"/>
<path fill="#f2d12b" d="M806.3,319.6L835.7,324L843.9,310.1L818.3,305.7z"/>
<path fill="#ffea30" d="M734.4,324.5L764.1,332.6L777.8,313.5L751.2,305.7z"/>
<path fill="#e9c929" d="M865.2,326.5L893.9,327.3L895,314.4L869.7,313z"/>
<path fill="#a58e1d" d="M893,398.9L922.5,393.6L923.7,388.4z"/>
<path fill="#a18b1c" d="M893,398.9L923.7,388.4L892.3,393.4z"/>
<path fill="#574b0f" d="M953.6,370.5L979.7,363L978.5,349L952.8,355.3z"/>
<path fill="#edcd2a" d="M835.7,324L865.2,326.5L869.7,313L843.9,310.1z"/>
<path fill="#a9921e" d="M952.8,355.3L978.5,349L974.7,334z"/>
<path fill="#a48e1d" d="M952.8,355.3L974.7,334L950.2,338.9z"/>
<path fill="#756515" d="M725.3,383.7L756.6,390.7L752.3,375L720,367.4z"/>
<path fill="#786815" d="M797.8,402.1L829.9,403.4L824.5,397z"/>
<path fill="#746415" d="M797.8,402.1L824.5,397L790,395.1z"/>
<path fill="#d7b926" d="M922.8,342.5L946.3,324.2L921.1,326.5z"/>
<path fill="#dabd27" d="M922.8,342.5L950.2,338.9L946.3,324.2z"/>
<path fill="#95811a" d="M861.9,402.2L893,398.9L892.3,393.4z"/>
<path fill="#917d1a" d="M861.9,402.2L892.3,393.4L859,396.4z"/>
<path fill="#5f5211" d="M923.7,388.4L952.4,381.5L953.6,370.5z"/>
<path fill="#5c5010" d="M923.7,388.4L953.6,370.5L924.2,376.5z"/>
<path fill="#867418" d="M829.9,403.4L861.9,402.2L859,396.4z"/>
<path fill="#827017" d="M829.9,403.4L859,396.4L824.5,397z"/>
<path fill="#ffe82f" d="M723.2,346.3L754.9,354.3L764.1,332.6L734.4,324.5z"/>
<path fill="#ffe32e" d="M764.1,332.6L795.8,338.7L806.3,319.6L777.8,313.5z"/>
<path fill="#dcbe27" d="M720,367.4L752.3,375L754.9,354.3L723.2,346.3z"/>
<path fill="#e0c228" d="M892.9,344.5L921.1,326.5L893.9,327.3z"/>
<path fill="#e4c528" d="M892.9,344.5L922.8,342.5L921.1,326.5z"/>
<path fill="#b89f20" d="M923.9,360.2L952.8,355.3L950.2,338.9z"/>
<path fill="#b39b20" d="M923.9,360.2L950.2,338.9L922.8,342.5z"/>
<path fill="#6b5d13" d="M924.2,376.5L953.6,370.5L952.8,355.3L923.9,360.2z"/>
<path fill="#665812" d="M756.6,390.7L790,395.1L786.7,380.2L752.3,375z"/>
<path fill="#493f0d" d="M892.3,393.4L923.7,388.4L924.2,376.5L892,380.8z"/>
<path fill="#fedc2d" d="M795.8,338.7L828.5,342.7L835.7,324L806.3,319.6z"/>
<path fill="#eaca29" d="M861.2,344.6L893.9,327.3L865.2,326.5z"/>
<path fill="#edcd2a" d="M861.2,344.6L892.9,344.5L893.9,327.3z"/>
<path fill="#f4d32b" d="M828.5,342.7L865.2,326.5L835.7,324z"/>
<path fill="#f7d52c" d="M828.5,342.7L861.2,344.6L865.2,326.5z"/>
<path fill="#ffde2d" d="M754.9,354.3L788.8,360.1L795.8,338.7L764.1,332.6z"/>
<path fill="#352e09" d="M859,396.4L892.3,393.4L892,380.8L857.7,383z"/>
<path fill="#55490f" d="M790,395.1L824.5,397L822.3,382.9L786.7,380.2z"/>
<path fill="#cdb124" d="M752.3,375L786.7,380.2L788.8,360.1L754.9,354.3z"/>
<path fill="#c7ac23" d="M892.2,363.4L923.9,360.2L922.8,342.5z"/>
<path fill="#c3a923" d="M892.2,363.4L922.8,342.5L892.9,344.5z"/>
<path fill="#806e16" d="M892,380.8L924.2,376.5L923.9,360.2L892.2,363.4z"/>
<path fill="#42390c" d="M824.5,397L859,396.4L857.7,383L822.3,382.9z"/>
<path fill="#f2d12b" d="M788.8,360.1L828.5,342.7L795.8,338.7z"/>
<path fill="#f5d32b" d="M788.8,360.1L823.7,363.5L828.5,342.7z"/>
<path fill="#d3b725" d="M858.5,364.6L892.9,344.5L861.2,344.6z"/>
<path fill="#d7ba26" d="M858.5,364.6L892.2,363.4L892.9,344.5z"/>
<path fill="#94801a" d="M857.7,383L892,380.8L892.2,363.4L858.5,364.6z"/>
<path fill="#e3c428" d="M823.7,363.5L861.2,344.6L828.5,342.7z"/>
<path fill="#e6c729" d="M823.7,363.5L858.5,364.6L861.2,344.6z"/>
<path fill="#bba221" d="M786.7,380.2L822.3,382.9L823.7,363.5L788.8,360.1z"/>
<path fill="#a8911e" d="M822.3,382.9L857.7,383L858.5,364.6L823.7,363.5z"/>
</g>
<g fill="none" stroke="#000" stroke-width="1"><path d="M903.8,37V151"/><path stroke-dasharray="2 1" d="M903.8,151V192"/><path stroke-dasharray="3 3" d="M924.4,377.5L959.3,560.3"/></g>
</svg></div>
</body></html>
